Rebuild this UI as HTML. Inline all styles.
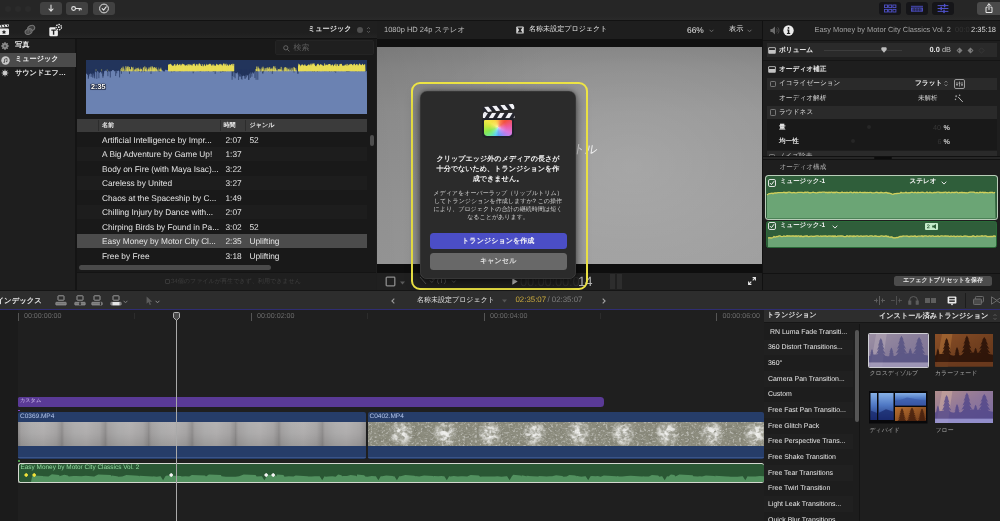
<!DOCTYPE html>
<html lang="ja">
<head>
<meta charset="utf-8">
<title>Final Cut Pro</title>
<style>
*{box-sizing:border-box;margin:0;padding:0}
html,body{width:1000px;height:521px;overflow:hidden;background:#1e1e1e}
body{position:relative;text-rendering:geometricPrecision;font-family:"Liberation Sans",sans-serif;font-size:9px;color:#dcdcdc;line-height:1}
#root{position:absolute;left:0;top:0;width:1000px;height:521px;overflow:hidden;will-change:transform}
.abs{position:absolute}
.t{position:absolute;white-space:nowrap;line-height:1}
.b{font-weight:bold}
svg{position:absolute;overflow:visible}
/* top toolbar */
#tb{left:0;top:0;width:1000px;height:21px;background:linear-gradient(#262626 0,#262626 80%,#2a2a2a 100%);border-bottom:1px solid #121212}
.tbtn{position:absolute;top:2px;height:13px;width:22px;border-radius:3px;background:#414141}
.tbtn.dark{background:#151518}
/* row2 */
#row2{left:0;top:21px;width:1000px;height:18px;background:linear-gradient(#1f1f1f 0,#1f1f1f 70%,#242424 100%);border-bottom:1px solid #121212}
/* sidebar */
#side{left:0;top:39px;width:76.5px;height:251px;background:#1e1e1e;border-right:2px solid #141414}
#side .sel{left:0;top:14px;width:76px;height:13.5px;background:#4b4b4b}
/* browser */
#br{left:77px;top:39px;width:299px;height:251px;background:#191919}
#search{left:198px;top:1px;width:99px;height:15px;background:#1f1f1f;border:1px solid #242424;border-radius:2px}
#wf{left:8.5px;top:21px;width:281.5px;height:54px;background:#22345b;overflow:hidden}
#th{left:0;top:80.4px;width:290px;height:12.8px;background:#3b3b3b}
.row{position:absolute;left:0;width:290px;height:14.5px}
.row.alt{background:#1d1d1d}
.row.sel{background:#4c4c4c}
.row span{position:absolute;top:3.6px;white-space:nowrap;color:#e4e4e4;font-size:8.3px}
/* viewer */
#vw{left:377px;top:21px;width:384.5px;height:269px;background:#1e1e1e}
#vimg{left:0;top:26px;width:384.5px;height:217px;background:linear-gradient(to right,rgba(0,0,0,.075) 0%,rgba(0,0,0,.03) 25%,rgba(0,0,0,0) 45%),radial-gradient(ellipse 60% 72% at 66% 55%,rgba(255,255,255,.13) 0%,rgba(255,255,255,.075) 40%,rgba(255,255,255,0) 100%),linear-gradient(to bottom,#838383 0%,#8c8c8c 10%,#959595 30%,#989898 50%,#9c9c9c 75%,#9e9e9e 100%)}
/* inspector */
#in{left:762px;top:21px;width:238px;height:269px;background:#1e1e1e;border-left:1px solid #111}
.irow{position:absolute;left:3.5px;width:230px;background:#2a2a2a}
/* timeline */
#tlbar{left:0;top:290px;width:1000px;height:20px;background:#2d2d2d;border-top:1px solid #151515;border-bottom:1.5px solid #2f2d72;z-index:3}
#tl{left:0;top:310px;width:763.5px;height:211px;background:#1f1f1f;overflow:hidden}
/* transitions */
#tr{left:764px;top:310px;width:236px;height:211px;background:#1e1e1e;overflow:hidden}
#tr .li{position:absolute;left:4px;font-size:6.95px;color:#e6e6e6;white-space:nowrap}
/* dialog */
#hl{left:411px;top:82px;width:176.5px;height:207.5px;border:2px solid #efe645;border-radius:9px}
#dlg{left:420px;top:91px;width:156px;height:188px;background:#2b2b2b;border-radius:7px;box-shadow:0 4px 14px rgba(0,0,0,.5),0 0 4px rgba(0,0,0,.35),0 0 0 .5px rgba(255,255,255,.12) inset}

</style>
</head>
<body>
<div id="root">

<!-- toolbar -->
<div id="tb" class="abs"><div class="abs" style="left:5px;top:6px;width:6px;height:6px;border-radius:50%;background:#2b2b2b"></div><div class="abs" style="left:15px;top:6px;width:6px;height:6px;border-radius:50%;background:#2b2b2b"></div><div class="abs" style="left:25px;top:6px;width:6px;height:6px;border-radius:50%;background:#2b2b2b"></div><div class="tbtn" style="left:39.5px"><svg width="22" height="13" viewBox="0 0 22 13"><path d="M11 3v6M9 7L11 9.200l2-2.200" fill="none" stroke="#e2e2e2" stroke-width="1.100" stroke-linecap="round" stroke-linejoin="round"/></svg></div><div class="tbtn" style="left:66px"><svg width="22" height="13" viewBox="0 0 22 13"><circle cx="7.6" cy="6.5" r="1.9" fill="none" stroke="#e2e2e2" stroke-width="1.1"/><path d="M9.5 6.5h5.6M13.3 6.5v1.8M15.1 6.5v1.3" fill="none" stroke="#e2e2e2" stroke-width="1.1" stroke-linecap="round"/></svg></div><div class="tbtn" style="left:92.5px"><svg width="22" height="13" viewBox="0 0 22 13"><circle cx="11" cy="6.500" r="4.400" fill="none" stroke="#e2e2e2" stroke-width="1"/><path d="M9.2 6.6l1.4 1.5 2.6-3.3" fill="none" stroke="#e2e2e2" stroke-width="1.1" stroke-linecap="round" stroke-linejoin="round"/></svg></div><div class="tbtn dark" style="left:879px"><svg width="22" height="13" viewBox="0 0 22 13" fill="none" stroke="#4f51c8" stroke-width=".9"><rect x="5.5" y="3" width="3" height="2.6"/><rect x="9.7" y="3" width="3" height="2.6"/><rect x="13.9" y="3" width="3" height="2.6"/><rect x="5.5" y="7.4" width="3" height="2.6"/><rect x="9.7" y="7.4" width="3" height="2.6"/><rect x="13.9" y="7.4" width="3" height="2.6"/></svg></div><div class="tbtn dark" style="left:905.5px"><svg width="22" height="13" viewBox="0 0 22 13" fill="none" stroke="#4f51c8" stroke-width=".9"><path d="M5 4.3h12"/><rect x="5.5" y="6" width="11" height="3.2" fill="#4f51c8" fill-opacity=".55"/><path d="M8.2 6v3.2M11 6v3.2M13.8 6v3.2" stroke="#151518" stroke-width=".6"/></svg></div><div class="tbtn dark" style="left:932px"><svg width="22" height="13" viewBox="0 0 22 13" fill="none" stroke="#4f51c8" stroke-width="1" stroke-linecap="round"><path d="M6 3.6h10M6 6.5h10M6 9.4h10"/><path d="M12.6 2.4v2.4M9.2 5.3v2.4M12 8.2v2.4" stroke-width="1.5"/></svg></div><div class="tbtn" style="left:977px;width:24px;background:#4a4a4a;border-radius:3px 0 0 3px"><svg width="24" height="13" viewBox="0 0 24 13" fill="none" stroke="#e8e8e8" stroke-width="1" stroke-linecap="round" stroke-linejoin="round"><path d="M10.2 5.2H9v5.3h6V5.2h-1.2M12 1.9v5.6M10.3 3.5L12 1.8l1.7 1.7"/></svg></div></div><div id="row2" class="abs"></div>
<!-- browser -->
<div class="abs" style="left:0;top:21px;width:376px;height:18px"><svg style="left:-1px;top:3px" width="11" height="12" viewBox="0 0 11 12"><path d="M0 1.2l9.6-1 .4 2.6-10 .9z" fill="#e9e9e9"/><path d="M2 1l1.2 2.4M5 .7l1.2 2.4M8 .4l1.2 2.4" stroke="#222" stroke-width="1"/><rect x="0" y="4.4" width="10" height="6.6" rx="1" fill="#e9e9e9"/><path d="M5 5.8l.7 1.4 1.5.2-1.1 1 .3 1.5L5 9.2l-1.4.7.3-1.5-1.1-1 1.5-.2z" fill="#222"/></svg><svg style="left:24px;top:3px" width="12" height="12" viewBox="0 0 12 12" fill="#3c3c3c" stroke="#747474" stroke-width="1.1"><ellipse cx="7.2" cy="4.2" rx="3.6" ry="2.6" transform="rotate(-25 7.2 4.2)"/><ellipse cx="4.6" cy="7.6" rx="3.6" ry="2.6" transform="rotate(-25 4.6 7.6)" fill="#4a4a4a"/><path d="M4.2 8.8V6.2l2-.5v2.5" stroke-width=".8"/></svg><svg style="left:49px;top:2.5px" width="13" height="13" viewBox="0 0 13 13"><rect x="0.3" y="3.3" width="8.6" height="9" rx="1.2" fill="#ededed"/><path d="M2.3 5.6h4.6v1.2H5.3v4H3.9v-4H2.3z" fill="#222"/><circle cx="9.800" cy="3.200" r="3.600" fill="#1f1f1f"/><circle cx="9.800" cy="3.200" r="2.700" fill="none" stroke="#ededed" stroke-width="1.300" stroke-dasharray="1.500 .9"/><circle cx="9.800" cy="3.200" r=".9" fill="#ededed"/></svg><span class="t b" style="left:308px;top:5px;font-size:7.15px;color:#e2e2e2">ミュージック</span><div class="abs" style="left:356.5px;top:6px;width:6px;height:6px;border-radius:50%;background:#505050"></div><svg style="left:365.5px;top:5px" width="5" height="8" viewBox="0 0 5 8" fill="none" stroke="#5c5c5c" stroke-width=".9"><path d="M1 3l1.5-1.6L4 3M1 5l1.5 1.6L4 5"/></svg></div><div id="side" class="abs"><div class="abs sel"></div><svg style="left:1px;top:2.5px" width="8" height="8" viewBox="0 0 8 8"><g fill="#8e8e8e"><ellipse cx="4" cy="1.7" rx="1" ry="1.6" transform="rotate(0 4 4)"/><ellipse cx="4" cy="1.7" rx="1" ry="1.6" transform="rotate(45 4 4)"/><ellipse cx="4" cy="1.7" rx="1" ry="1.6" transform="rotate(90 4 4)"/><ellipse cx="4" cy="1.7" rx="1" ry="1.6" transform="rotate(135 4 4)"/><ellipse cx="4" cy="1.7" rx="1" ry="1.6" transform="rotate(180 4 4)"/><ellipse cx="4" cy="1.7" rx="1" ry="1.6" transform="rotate(225 4 4)"/><ellipse cx="4" cy="1.7" rx="1" ry="1.6" transform="rotate(270 4 4)"/><ellipse cx="4" cy="1.7" rx="1" ry="1.6" transform="rotate(315 4 4)"/></g></svg><span class="t b" style="left:15px;top:3.2px;font-size:7.15px;color:#e6e6e6">写真</span><svg style="left:0.5px;top:16.5px" width="9" height="9" viewBox="0 0 9 9"><circle cx="4.5" cy="4.5" r="4.2" fill="#c9c9c9"/><path d="M3.6 6.2V3.1l2.4-.6v3.1" fill="none" stroke="#4b4b4b" stroke-width=".8"/><circle cx="3.1" cy="6.2" r=".7" fill="#4b4b4b"/><circle cx="5.5" cy="5.6" r=".7" fill="#4b4b4b"/></svg><span class="t b" style="left:15px;top:17.2px;font-size:7.15px;color:#f0f0f0">ミュージック</span><svg style="left:1px;top:30px" width="8" height="8" viewBox="0 0 8 8"><g fill="#cfcfcf"><path d="M4 0l.8 2.6h-1.6z" transform="rotate(0 4 4)"/><path d="M4 0l.8 2.6h-1.6z" transform="rotate(45 4 4)"/><path d="M4 0l.8 2.6h-1.6z" transform="rotate(90 4 4)"/><path d="M4 0l.8 2.6h-1.6z" transform="rotate(135 4 4)"/><path d="M4 0l.8 2.6h-1.6z" transform="rotate(180 4 4)"/><path d="M4 0l.8 2.6h-1.6z" transform="rotate(225 4 4)"/><path d="M4 0l.8 2.6h-1.6z" transform="rotate(270 4 4)"/><path d="M4 0l.8 2.6h-1.6z" transform="rotate(315 4 4)"/><circle cx="4" cy="4" r="2"/></g></svg><span class="t b" style="left:15px;top:31.2px;font-size:7.15px;color:#e6e6e6">サウンドエフ…</span></div><div id="br" class="abs"><div id="search" class="abs"><svg style="left:7px;top:3.5px" width="7" height="7" viewBox="0 0 7 7" fill="none" stroke="#6a6a6a" stroke-width=".9"><circle cx="2.8" cy="2.8" r="2.1"/><path d="M4.4 4.4l2 2"/></svg><span class="t" style="left:17.5px;top:2.6px;font-size:8px;color:#5e5e5e">検索</span></div><div id="wf" class="abs"><svg width="281.5" height="54" viewBox="0 0 281.5 54" style="left:0;top:0"><path d="M0.0 54.0 L0.0 14.1 L0.8 13.6 L1.6 14.8 L2.4 13.4 L3.2 14.4 L4.0 14.0 L4.8 13.2 L5.6 14.2 L6.4 13.1 L7.2 14.0 L8.0 13.1 L8.8 11.1 L9.6 11.8 L10.4 12.8 L11.2 11.0 L12.0 11.2 L12.8 12.2 L13.6 12.9 L14.4 12.0 L15.2 11.5 L16.0 12.8 L16.8 10.6 L17.6 12.5 L18.4 11.1 L19.2 10.7 L20.0 10.6 L20.8 11.0 L21.6 12.2 L22.4 10.6 L23.2 11.5 L24.0 11.6 L24.8 11.0 L25.6 11.3 L26.4 10.1 L27.2 10.1 L28.0 10.4 L28.8 11.5 L29.6 10.8 L30.4 10.5 L31.2 11.1 L32.0 10.8 L32.8 10.4 L33.6 11.5 L34.4 11.3 L35.2 10.0 L36.0 10.8 L36.8 10.7 L37.6 11.5 L38.4 11.2 L39.2 10.1 L40.0 11.8 L40.8 9.7 L41.6 10.4 L42.4 11.2 L43.2 9.8 L44.0 10.6 L44.8 9.5 L45.6 11.0 L46.4 11.2 L47.2 10.8 L48.0 11.5 L48.8 10.2 L49.6 11.1 L50.4 10.8 L51.2 10.8 L52.0 10.5 L52.8 11.4 L53.6 11.7 L54.4 10.5 L55.2 11.0 L56.0 9.5 L56.8 11.1 L57.6 11.0 L58.4 11.8 L59.2 11.4 L60.0 10.1 L60.8 10.3 L61.6 11.0 L62.4 9.5 L63.2 10.5 L64.0 9.8 L64.8 9.7 L65.6 9.5 L66.4 11.2 L67.2 9.7 L68.0 10.0 L68.8 10.3 L69.6 11.5 L70.4 9.6 L71.2 10.5 L72.0 10.7 L72.8 11.5 L73.6 11.4 L74.4 11.5 L75.2 10.1 L76.0 10.4 L76.8 10.3 L77.6 11.5 L78.4 11.7 L79.2 9.8 L80.0 9.8 L80.8 10.0 L81.6 10.0 L82.4 10.6 L83.2 10.8 L84.0 10.0 L84.8 9.4 L85.6 10.4 L86.4 10.3 L87.2 10.8 L88.0 11.7 L88.8 11.1 L89.6 10.6 L90.4 10.9 L91.2 11.0 L92.0 9.5 L92.8 11.6 L93.6 11.3 L94.4 11.5 L95.2 11.3 L96.0 10.3 L96.8 10.4 L97.6 9.6 L98.4 10.9 L99.2 9.5 L100.0 9.6 L100.8 9.9 L101.6 9.8 L102.4 10.2 L103.2 9.5 L104.0 9.4 L104.8 9.8 L105.6 9.6 L106.4 10.3 L107.2 9.5 L108.0 11.5 L108.8 10.9 L109.6 9.8 L110.4 10.0 L111.2 10.2 L112.0 10.3 L112.8 9.7 L113.6 11.4 L114.4 11.8 L115.2 10.5 L116.0 10.6 L116.8 9.6 L117.6 9.6 L118.4 10.2 L119.2 10.0 L120.0 11.4 L120.8 9.8 L121.6 9.5 L122.4 11.7 L123.2 10.7 L124.0 9.8 L124.8 10.7 L125.6 9.5 L126.4 10.7 L127.2 11.7 L128.0 11.5 L128.8 11.1 L129.6 10.0 L130.4 10.3 L131.2 9.8 L132.0 11.3 L132.8 10.7 L133.6 11.3 L134.4 10.2 L135.2 9.9 L136.0 11.3 L136.8 11.8 L137.6 11.4 L138.4 11.3 L139.2 11.4 L140.0 11.2 L140.8 9.9 L141.6 10.6 L142.4 10.3 L143.2 9.5 L144.0 9.5 L144.8 10.1 L145.6 10.0 L146.4 11.8 L147.2 12.5 L148.0 11.5 L148.8 12.8 L149.6 13.2 L150.4 13.5 L151.2 12.4 L152.0 12.5 L152.8 12.9 L153.6 13.3 L154.4 13.7 L155.2 15.1 L156.0 16.1 L156.8 16.2 L157.6 15.4 L158.4 15.9 L159.2 16.1 L160.0 14.2 L160.8 15.2 L161.6 15.4 L162.4 14.7 L163.2 14.2 L164.0 13.1 L164.8 12.0 L165.6 13.1 L166.4 11.7 L167.2 12.5 L168.0 12.7 L168.8 11.2 L169.6 11.1 L170.4 12.3 L171.2 11.7 L172.0 9.8 L172.8 9.7 L173.6 9.8 L174.4 11.6 L175.2 11.3 L176.0 9.8 L176.8 11.4 L177.6 11.8 L178.4 11.0 L179.2 10.2 L180.0 10.7 L180.8 9.7 L181.6 9.4 L182.4 11.7 L183.2 11.0 L184.0 10.7 L184.8 11.6 L185.6 10.4 L186.4 11.5 L187.2 11.4 L188.0 9.9 L188.8 10.0 L189.6 10.1 L190.4 10.0 L191.2 10.8 L192.0 10.0 L192.8 10.4 L193.6 9.7 L194.4 11.6 L195.2 10.2 L196.0 10.5 L196.8 10.8 L197.6 11.6 L198.4 10.4 L199.2 11.6 L200.0 10.6 L200.8 10.7 L201.6 10.7 L202.4 9.4 L203.2 10.5 L204.0 9.8 L204.8 9.4 L205.6 11.3 L206.4 9.8 L207.2 10.5 L208.0 11.1 L208.8 10.7 L209.6 10.2 L210.4 10.6 L211.2 10.7 L212.0 11.3 L212.8 9.7 L213.6 10.7 L214.4 10.0 L215.2 10.1 L216.0 11.3 L216.8 10.6 L217.6 10.7 L218.4 11.2 L219.2 11.6 L220.0 10.5 L220.8 10.9 L221.6 10.6 L222.4 10.6 L223.2 11.1 L224.0 10.5 L224.8 10.7 L225.6 10.5 L226.4 11.7 L227.2 11.1 L228.0 11.5 L228.8 11.7 L229.6 10.0 L230.4 10.7 L231.2 11.7 L232.0 11.4 L232.8 9.7 L233.6 9.7 L234.4 10.5 L235.2 9.6 L236.0 10.0 L236.8 9.6 L237.6 11.0 L238.4 11.3 L239.2 11.6 L240.0 9.8 L240.8 11.1 L241.6 11.0 L242.4 9.7 L243.2 11.5 L244.0 11.7 L244.8 9.9 L245.6 11.7 L246.4 10.4 L247.2 10.6 L248.0 11.8 L248.8 11.4 L249.6 9.8 L250.4 10.4 L251.2 10.6 L252.0 10.2 L252.8 9.9 L253.6 10.2 L254.4 11.1 L255.2 9.4 L256.0 10.7 L256.8 10.5 L257.6 9.4 L258.4 10.2 L259.2 10.9 L260.0 10.6 L260.8 9.6 L261.6 11.8 L262.4 11.3 L263.2 11.7 L264.0 9.7 L264.8 10.0 L265.6 9.5 L266.4 11.3 L267.2 10.0 L268.0 9.7 L268.8 10.4 L269.6 11.6 L270.4 11.4 L271.2 10.0 L272.0 9.8 L272.8 11.6 L273.6 10.8 L274.4 11.1 L275.2 9.6 L276.0 9.5 L276.8 11.1 L277.6 10.4 L278.4 9.6 L279.2 11.7 L280.0 10.9 L280.8 11.3 L281.5 54.0 Z" fill="#6b82b2"/><path d="M2.9 9L2.9 16.2 M160.4 9L160.4 17.4 M1.5 9L1.5 14.8 M177.0 9L177.0 13.5 M159.0 9L159.0 18.6 M5.2 9L5.2 16.9 M6.6 9L6.6 17.6 M163.1 9L163.1 19.8 M10.8 9L10.8 18.8 M162.5 9L162.5 19.9 M146.4 9L146.4 16.0 M107.2 9L107.2 13.3 M152.3 9L152.3 14.3 M146.1 9L146.1 19.8 M152.4 9L152.4 14.5 M154.7 9L154.7 16.5 M159.1 9L159.1 18.7 M161.3 9L161.3 15.1 M8.1 9L8.1 17.6 M168.9 9L168.9 18.0 M17.3 9L17.3 13.3 M176.6 9L176.6 13.4 M211.9 9L211.9 13.7 M164.4 9L164.4 17.8 M24.3 9L24.3 17.5 M33.6 9L33.6 17.4 M21.9 9L21.9 16.2 M2.5 9L2.5 17.6 M2.3 9L2.3 18.9 M65.0 9L65.0 14.0 M134.8 9L134.8 12.6 M55.8 9L55.8 12.3 M85.7 9L85.7 12.3 M16.9 9L16.9 17.8 M153.6 9L153.6 16.3 M171.8 9L171.8 19.8 M129.2 9L129.2 13.9 M15.7 9L15.7 13.5 M165.4 9L165.4 13.9 M249.7 9L249.7 12.7 M17.4 9L17.4 13.0 M17.2 9L17.2 15.9 M149.1 9L149.1 18.3 M260.8 9L260.8 12.0 M152.6 9L152.6 20.0 M155.4 9L155.4 19.0 M186.3 9L186.3 13.9 M8.7 9L8.7 18.4 M8.2 9L8.2 15.8 M30.7 9L30.7 13.3 M211.9 9L211.9 13.7 M17.0 9L17.0 16.3 M208.0 9L208.0 12.5 M153.8 9L153.8 13.8 M148.0 9L148.0 16.9 M154.7 9L154.7 14.0 M6.7 9L6.7 15.2 M12.9 9L12.9 18.2 M156.8 9L156.8 14.9 M159.0 9L159.0 13.9 M17.6 9L17.6 13.6 M156.0 9L156.0 19.7 M29.7 9L29.7 16.0 M166.9 9L166.9 13.0 M170.1 9L170.1 19.8 M43.5 9L43.5 13.9 M167.5 9L167.5 13.6 M35.4 9L35.4 13.8 M153.9 9L153.9 16.7 M165.9 9L165.9 16.7" stroke="#22345b" stroke-width=".7" fill="none"/><path d="M82.0 11.3 L82.0 5.1 L82.6 4.6 L83.2 4.1 L83.8 5.2 L84.4 3.4 L85.0 4.3 L85.6 4.8 L86.2 6.3 L86.8 5.3 L87.4 6.1 L88.0 4.8 L88.6 4.1 L89.2 4.1 L89.8 6.3 L90.4 5.5 L91.0 4.3 L91.6 3.5 L92.2 4.9 L92.8 5.4 L93.4 4.7 L94.0 4.2 L94.6 5.4 L95.2 6.2 L95.8 4.1 L96.4 3.5 L97.0 4.4 L97.6 4.7 L98.2 5.4 L98.8 4.0 L99.4 5.8 L100.0 5.6 L100.6 4.9 L101.2 4.0 L101.8 6.3 L102.4 4.3 L103.0 5.9 L103.6 4.1 L104.2 4.1 L104.8 5.7 L105.4 4.3 L106.0 6.3 L106.6 4.9 L107.2 4.0 L107.8 4.1 L108.4 4.7 L109.0 5.4 L109.6 6.2 L110.2 3.8 L110.8 4.6 L111.4 4.0 L112.0 6.3 L112.6 3.8 L113.2 3.6 L113.8 3.6 L114.4 4.6 L115.0 6.1 L115.6 6.1 L116.2 5.6 L116.8 6.4 L117.4 6.2 L118.0 4.4 L118.6 4.0 L119.2 6.2 L119.8 5.6 L120.4 3.5 L121.0 5.4 L121.6 4.5 L122.2 4.5 L122.8 4.4 L123.4 3.9 L124.0 3.4 L124.6 4.2 L125.2 4.5 L125.8 6.3 L126.4 3.8 L127.0 6.3 L127.6 4.0 L128.2 4.5 L128.8 5.9 L129.4 5.9 L130.0 4.7 L130.6 3.5 L131.2 4.8 L131.8 4.5 L132.4 6.2 L133.0 4.0 L133.6 4.5 L134.2 6.1 L134.8 3.5 L135.4 4.6 L136.0 5.8 L136.6 5.7 L137.2 3.5 L137.8 3.5 L138.4 3.6 L139.0 6.2 L139.6 4.2 L140.2 5.6 L140.8 6.1 L141.4 4.4 L142.0 4.2 L142.6 6.3 L143.2 5.3 L143.8 4.2 L144.4 5.5 L145.0 4.3 L145.6 4.2 L146.2 3.4 L146.8 5.7 L147.4 6.1 L148.0 5.3 L148.0 11.3Z M212.0 11.3 L212.0 6.2 L212.6 3.5 L213.2 4.1 L213.8 4.8 L214.4 6.3 L215.0 6.3 L215.6 4.6 L216.2 4.2 L216.8 4.7 L217.4 4.9 L218.0 6.2 L218.6 3.9 L219.2 5.8 L219.8 5.6 L220.4 5.9 L221.0 5.7 L221.6 5.2 L222.2 4.4 L222.8 4.4 L223.4 4.5 L224.0 5.7 L224.6 3.6 L225.2 4.0 L225.8 5.7 L226.4 4.1 L227.0 3.6 L227.6 3.5 L228.2 5.1 L228.8 4.4 L229.4 6.3 L230.0 6.1 L230.6 6.4 L231.2 4.2 L231.8 3.7 L232.4 3.7 L233.0 4.9 L233.6 5.5 L234.2 4.7 L234.8 4.1 L235.4 4.7 L236.0 5.3 L236.6 5.4 L237.2 5.6 L237.8 5.9 L238.4 5.4 L239.0 3.8 L239.6 5.9 L240.2 4.3 L240.8 5.1 L241.4 4.5 L242.0 5.6 L242.6 4.0 L243.2 4.1 L243.8 4.1 L244.4 3.9 L245.0 6.1 L245.6 5.1 L246.2 4.4 L246.8 4.6 L247.4 6.4 L248.0 4.9 L248.6 4.1 L249.2 5.8 L249.8 5.4 L250.4 6.4 L251.0 3.7 L251.6 4.8 L252.2 5.9 L252.8 5.9 L253.4 6.1 L254.0 3.5 L254.6 4.3 L255.2 3.8 L255.8 4.0 L256.4 6.3 L257.0 5.1 L257.6 6.2 L258.2 4.5 L258.8 6.0 L259.4 4.7 L260.0 4.2 L260.6 5.7 L261.2 6.2 L261.8 3.7 L262.4 5.2 L263.0 5.3 L263.6 4.1 L264.2 4.5 L264.8 3.8 L265.4 4.0 L266.0 4.2 L266.6 5.2 L267.2 5.4 L267.8 4.0 L268.4 3.4 L269.0 4.4 L269.6 5.4 L270.2 4.0 L270.8 4.3 L271.4 4.0 L272.0 5.8 L272.6 5.0 L273.2 3.6 L273.8 3.7 L274.4 4.6 L275.0 5.1 L275.6 5.3 L276.2 3.7 L276.8 3.9 L277.4 5.5 L278.0 4.6 L278.6 4.2 L279.2 4.3 L279.5 11.3Z" fill="#e6db55"/><path d="M36.0 11.3 L36.0 10.8 L36.6 7.9 L37.2 9.0 L37.8 8.1 L38.4 8.4 L39.0 10.4 L39.6 11.0 L40.2 8.1 L40.8 7.4 L41.4 9.8 L42.0 7.4 L42.6 6.5 L43.2 10.6 L43.8 8.4 L44.4 10.2 L45.0 8.3 L45.6 10.5 L46.2 8.6 L46.8 7.2 L47.4 6.6 L48.0 9.0 L48.6 9.4 L49.2 10.6 L49.8 6.9 L50.4 9.3 L51.0 8.2 L51.6 8.8 L52.2 7.2 L52.8 7.8 L53.4 8.8 L54.0 10.7 L54.6 7.0 L55.2 8.7 L55.8 10.1 L56.4 10.9 L57.0 7.4 L57.6 7.1 L58.2 10.7 L58.8 10.9 L59.4 8.7 L60.0 6.7 L60.6 10.7 L61.2 8.2 L61.8 10.6 L62.4 9.3 L63.0 10.2 L63.6 7.2 L64.2 10.0 L64.8 7.5 L65.4 8.3 L66.0 10.3 L66.6 10.2 L67.2 7.3 L67.8 7.5 L68.4 8.3 L69.0 8.8 L69.6 8.2 L70.2 7.1 L70.8 7.6 L71.4 9.8 L72.0 10.5 L72.6 6.7 L73.2 9.0 L73.8 9.9 L74.4 6.7 L75.0 10.3 L75.6 7.0 L76.0 11.3Z M170.0 11.3 L170.0 9.2 L170.6 9.0 L171.2 9.3 L171.8 7.9 L172.4 8.4 L173.0 9.1 L173.6 8.4 L174.2 9.5 L174.8 8.5 L175.4 8.5 L176.0 6.6 L176.6 9.3 L177.2 8.7 L177.8 7.6 L178.4 9.9 L179.0 10.0 L179.6 8.6 L180.2 7.3 L180.8 8.6 L181.4 7.0 L182.0 7.1 L182.6 8.4 L183.2 6.9 L183.8 8.5 L184.4 8.8 L185.0 6.7 L185.6 9.4 L186.2 6.9 L186.8 9.8 L187.4 10.0 L188.0 8.8 L188.6 6.7 L189.2 8.8 L189.8 8.2 L190.4 10.8 L191.0 7.1 L191.6 10.4 L192.2 11.0 L192.8 9.8 L193.4 10.2 L194.0 7.4 L194.6 10.9 L195.2 8.7 L195.8 10.8 L196.4 10.6 L197.0 7.2 L197.6 10.0 L198.2 10.7 L198.8 6.8 L199.4 8.1 L200.0 9.9 L200.6 7.2 L201.2 10.5 L201.8 7.7 L202.4 10.2 L203.0 7.1 L203.6 8.8 L204.2 10.6 L204.8 7.4 L205.4 7.7 L206.0 8.8 L206.6 7.9 L207.2 6.7 L207.8 7.3 L208.4 7.2 L209.0 10.7 L209.6 9.6 L210.2 10.5 L210.8 7.3 L211.0 11.3Z" fill="#e6db55" opacity=".5"/><path d="M35.7 11.2 V7.8 M37.1 11.2 V6.6 M39.9 11.2 V6.2 M41.3 11.2 V6.9 M42.0 11.2 V6.2 M43.4 11.2 V7.0 M44.1 11.2 V9.1 M45.5 11.2 V6.8 M46.2 11.2 V7.5 M49.0 11.2 V9.7 M49.7 11.2 V9.2 M51.1 11.2 V7.9 M52.5 11.2 V8.9 M53.9 11.2 V9.7 M54.6 11.2 V9.3 M55.3 11.2 V8.9 M57.4 11.2 V7.5 M58.8 11.2 V6.4 M59.5 11.2 V9.2 M60.2 11.2 V7.5 M62.3 11.2 V8.8 M63.0 11.2 V7.4 M64.4 11.2 V7.4 M65.1 11.2 V6.4 M66.5 11.2 V6.5 M67.2 11.2 V7.8 M67.9 11.2 V8.9 M68.6 11.2 V7.0 M69.3 11.2 V7.8 M70.7 11.2 V9.0 M74.2 11.2 V8.6 M74.9 11.2 V9.5 M83.4 11.2 V4.2 M84.8 11.2 V4.9 M85.5 11.2 V8.2 M86.2 11.2 V8.2 M86.9 11.2 V7.5 M90.4 11.2 V6.1 M91.1 11.2 V4.6 M92.5 11.2 V5.5 M93.9 11.2 V4.0 M94.6 11.2 V8.0 M95.3 11.2 V4.9 M97.4 11.2 V4.0 M98.1 11.2 V8.1 M102.3 11.2 V4.2 M104.4 11.2 V5.0 M105.8 11.2 V8.3 M107.2 11.2 V3.8 M107.9 11.2 V9.5 M108.6 11.2 V3.7 M109.3 11.2 V8.8 M110.0 11.2 V9.4 M113.5 11.2 V5.9 M114.2 11.2 V4.4 M116.3 11.2 V4.1 M118.4 11.2 V8.4 M119.1 11.2 V9.5 M123.3 11.2 V9.1 M124.0 11.2 V4.8 M124.7 11.2 V7.6 M125.4 11.2 V9.6 M126.1 11.2 V7.9 M127.5 11.2 V7.6 M131.0 11.2 V7.0 M131.7 11.2 V4.7 M132.4 11.2 V5.1 M133.8 11.2 V4.1 M134.5 11.2 V4.4 M135.2 11.2 V9.7 M135.9 11.2 V4.7 M137.3 11.2 V6.5 M138.0 11.2 V4.5 M138.7 11.2 V6.5 M139.4 11.2 V4.3 M140.1 11.2 V3.6 M140.8 11.2 V8.3 M142.2 11.2 V9.0 M143.6 11.2 V4.6 M146.4 11.2 V7.1 M147.1 11.2 V3.9 M147.8 11.2 V3.9 M170.0 11.2 V9.0 M170.7 11.2 V6.5 M172.1 11.2 V6.6 M172.8 11.2 V8.1 M176.3 11.2 V8.6 M177.0 11.2 V6.7 M179.1 11.2 V8.2 M181.2 11.2 V8.1 M182.6 11.2 V9.0 M183.3 11.2 V7.2 M184.7 11.2 V9.2 M185.4 11.2 V8.6 M186.8 11.2 V8.6 M187.5 11.2 V6.3 M188.9 11.2 V6.3 M189.6 11.2 V8.4 M192.4 11.2 V9.0 M193.8 11.2 V9.0 M194.5 11.2 V9.6 M195.2 11.2 V6.9 M198.7 11.2 V7.6 M199.4 11.2 V7.1 M200.8 11.2 V7.7 M202.2 11.2 V8.9 M208.5 11.2 V7.5 M209.2 11.2 V8.2 M212.7 11.2 V6.9 M213.4 11.2 V5.7 M214.1 11.2 V5.3 M215.5 11.2 V5.4 M216.9 11.2 V6.5 M218.3 11.2 V6.2 M219.0 11.2 V4.6 M221.1 11.2 V6.0 M226.0 11.2 V3.5 M226.7 11.2 V5.3 M227.4 11.2 V4.7 M228.1 11.2 V3.3 M228.8 11.2 V9.3 M229.5 11.2 V7.1 M230.2 11.2 V7.0 M230.9 11.2 V5.2 M231.6 11.2 V8.0 M232.3 11.2 V4.9 M234.4 11.2 V4.5 M235.1 11.2 V8.3 M235.8 11.2 V4.7 M237.9 11.2 V6.0 M238.6 11.2 V3.4 M239.3 11.2 V5.5 M241.4 11.2 V7.8 M242.8 11.2 V4.3 M243.5 11.2 V4.2 M244.2 11.2 V7.3 M244.9 11.2 V6.9 M245.6 11.2 V9.7 M247.0 11.2 V8.1 M247.7 11.2 V6.6 M248.4 11.2 V5.6 M249.8 11.2 V3.7 M251.2 11.2 V4.3 M253.3 11.2 V4.3 M254.7 11.2 V9.6 M256.8 11.2 V9.0 M257.5 11.2 V8.2 M258.9 11.2 V8.7 M261.0 11.2 V3.9 M265.9 11.2 V5.2 M268.0 11.2 V4.0 M269.4 11.2 V8.2 M270.1 11.2 V6.5 M270.8 11.2 V6.7 M271.5 11.2 V6.5 M272.2 11.2 V6.2 M273.6 11.2 V4.2 M274.3 11.2 V6.0 M276.4 11.2 V7.0 M277.8 11.2 V5.6" stroke="#e8dd57" stroke-width=".8" fill="none"/><path d="M10.0 11.2 V9.1 M15.6 11.2 V9.0 M21.2 11.2 V9.3 M34.5 11.2 V9.0" stroke="#e8dd57" stroke-width=".7" fill="none" opacity=".55"/></svg><span class="t b" style="left:4.5px;top:23.5px;padding:0 1px;height:6.5px;line-height:6.5px;background:rgba(30,40,70,.55);font-size:7.2px;color:#fff;text-shadow:0 0 1px #000,0 0 1.5px #000">2:35</span></div><div id="th" class="abs"><div class="abs" style="left:20.5px;top:1px;width:1px;height:10.5px;background:#2c2c2c"></div><div class="abs" style="left:143px;top:1px;width:1px;height:10.5px;background:#2c2c2c"></div><div class="abs" style="left:168px;top:1px;width:1px;height:10.5px;background:#2c2c2c"></div><span class="t b" style="left:25px;top:3.4px;font-size:6.1px;color:#ececec">名前</span><span class="t b" style="left:146.5px;top:3.4px;font-size:6.1px;color:#ececec">時間</span><span class="t b" style="left:172.5px;top:3.4px;font-size:6.1px;color:#ececec">ジャンル</span></div><div class="row" style="top:93.40px"><span style="left:25px">Artificial Intelligence by Impr...</span><span style="left:148.5px">2:07</span><span style="left:172.5px">52</span></div><div class="row alt" style="top:107.85px"><span style="left:25px">A Big Adventure by Game Up!</span><span style="left:148.5px">1:37</span><span style="left:172.5px"></span></div><div class="row" style="top:122.30px"><span style="left:25px">Body on Fire (with Maya Isac)...</span><span style="left:148.5px">3:22</span><span style="left:172.5px"></span></div><div class="row alt" style="top:136.75px"><span style="left:25px">Careless by United</span><span style="left:148.5px">3:27</span><span style="left:172.5px"></span></div><div class="row" style="top:151.20px"><span style="left:25px">Chaos at the Spaceship by C...</span><span style="left:148.5px">1:49</span><span style="left:172.5px"></span></div><div class="row alt" style="top:165.65px"><span style="left:25px">Chilling Injury by Dance with...</span><span style="left:148.5px">2:07</span><span style="left:172.5px"></span></div><div class="row" style="top:180.10px"><span style="left:25px">Chirping Birds by Found in Pa...</span><span style="left:148.5px">3:02</span><span style="left:172.5px">52</span></div><div class="row sel" style="top:194.55px"><span style="left:25px">Easy Money by Motor City Cl...</span><span style="left:148.5px">2:35</span><span style="left:172.5px">Uplifting</span></div><div class="row" style="top:209.00px"><span style="left:25px">Free by Free</span><span style="left:148.5px">3:18</span><span style="left:172.5px">Uplifting</span></div><div class="abs" style="left:292.5px;top:96px;width:4px;height:11px;border-radius:2px;background:#4e4e4e"></div><div class="abs" style="left:2px;top:226px;width:192px;height:4.5px;border-radius:2.5px;background:#4a4a4a"></div><div class="abs" style="left:0;top:232.5px;width:299px;height:18.5px;background:#1f1f1f;border-top:1px solid #141414"></div><div class="abs" style="left:87.500px;top:240.300px;width:5px;height:5px;border:.8px solid #383838;border-radius:1px"></div><span class="t" style="left:94px;top:240px;font-size:6.070px;color:#3e3e3e">34個のファイルが再生できず、利用できません</span></div>
<!-- viewer -->
<div id="vw" class="abs"><span class="t" style="left:7px;top:5.2px;font-size:7.5px;color:#bdbdbd">1080p HD 24p ステレオ</span><svg style="left:139px;top:5px" width="8" height="8" viewBox="0 0 9 9"><rect x=".3" y=".5" width="8.4" height="8" rx="1" fill="#d6d6d6"/><path d="M1.6 1.8h5.8L5.4 4.5l2 2.7H1.6l2-2.7z" fill="#1f1f1f"/></svg><span class="t" style="left:152px;top:5.3px;font-size:7.050px;color:#e6e6e6">名称未設定プロジェクト</span><span class="t" style="left:310px;top:4.6px;font-size:8.4px;color:#e0e0e0">66%</span><svg style="left:331.5px;top:7.5px" width="5" height="4" viewBox="0 0 5 4" fill="none" stroke="#6a6a6a" stroke-width="1"><path d="M.6.8l1.9 2 1.9-2"/></svg><span class="t" style="left:352px;top:5.3px;font-size:7.15px;color:#dedede">表示</span><svg style="left:369.5px;top:7.5px" width="5" height="4" viewBox="0 0 5 4" fill="none" stroke="#6a6a6a" stroke-width="1"><path d="M.6.8l1.9 2 1.9-2"/></svg><div class="abs" style="left:0;top:17.5px;width:384.5px;height:9px;background:#101010"></div><div id="vimg" class="abs"></div><span class="t" style="left:195.500px;top:122px;font-size:12px;color:#f1f1f1;transform:skewX(-7deg) rotate(2deg)">トル</span><div class="abs" style="left:0;top:243px;width:384.5px;height:8.5px;background:#0e0e0e"></div><div class="abs" style="left:0;top:251.5px;width:384.5px;height:17.5px;background:#202020"></div><svg style="left:8px;top:255px" width="11" height="11" viewBox="0 0 11 11" fill="none" stroke="#8c8c8c" stroke-width="1.3"><rect x="1.200" y="1.200" width="8.600" height="8.600" rx=".8"/></svg><svg style="left:23px;top:259.500px" width="5" height="4" viewBox="0 0 5 4" fill="#5a5a5a"><path d="M0 .5h5L2.500 3.500z"/></svg><svg style="left:42px;top:255px" width="40" height="10" viewBox="0 0 40 10" fill="none" stroke="#5a5a5a" stroke-width="1"><path d="M1 1l6 7M13 3h3M20 2c-2 2-2 4 0 6M25 2c2 2 2 4 0 6M22.5 3v4"/><path d="M11 4.5l1.8 2 1.8-2M33 4.5l1.8 2 1.8-2" stroke-width=".9"/></svg><svg style="left:135px;top:257px" width="6" height="7" viewBox="0 0 6 7"><path d="M.3.2l5.4 3.3L.3 6.8z" fill="#cfcfcf"/></svg><span class="t" style="left:143px;top:254px;font-size:13px;letter-spacing:-.2px;color:#323232;font-weight:normal">00:00:00:0</span><span class="t" style="left:201px;top:253.500px;font-size:13.500px;letter-spacing:-.5px;color:#b4b4b4">14</span><div class="abs" style="left:233px;top:253px;width:5px;height:15px;background:#2d2d2d"></div><div class="abs" style="left:240px;top:253px;width:5px;height:15px;background:#2d2d2d"></div><svg style="left:371px;top:256px" width="8" height="8" viewBox="0 0 8 8" fill="none" stroke="#e6e6e6" stroke-width="1.1"><path d="M4.6.6h2.8v2.8M7.2.8L4.7 3.3M3.4 7.4H.6V4.6M.8 7.2l2.5-2.5"/></svg></div>
<!-- inspector -->
<div id="in" class="abs"><svg style="left:7px;top:4.5px" width="10" height="9" viewBox="0 0 10 9"><path d="M.4 3h1.8L5 .6v7.8L2.2 6H.4z" fill="#6c6c6c"/><path d="M6.4 2.6c.9.9.9 2.9 0 3.8M7.8 1.4c1.6 1.6 1.6 4.6 0 6.2" fill="none" stroke="#555" stroke-width=".9"/></svg><svg style="left:19.5px;top:3.5px" width="11" height="11" viewBox="0 0 11 11"><circle cx="5.5" cy="5.5" r="5.2" fill="#ececec"/><circle cx="5.5" cy="2.9" r=".9" fill="#1f1f1f"/><path d="M4.2 4.5h2.1v3.6h.9v.9H3.9v-.9h.9V5.4h-.6z" fill="#1f1f1f"/></svg><span class="t" style="left:51.5px;top:5.399999999999999px;font-size:7.4px;color:#a2a2a2">Easy Money by Motor City Classics Vol. 2</span><span class="t" style="left:192px;top:5.399999999999999px;font-size:7.5px;color:#343434">00:0</span><span class="t" style="left:208px;top:5.399999999999999px;font-size:7.5px;color:#dcdcdc">2:35:18</span><div class="abs" style="left:0;top:18.5px;width:238px;height:1px;background:#141414"></div><div class="irow" style="top:22px;height:14px"></div><svg style="left:5px;top:25.5px" width="8" height="7" viewBox="0 0 8 7"><rect x=".2" y=".2" width="7.6" height="6.6" rx="1" fill="#c4c4c4"/><rect x="1.1" y="1.1" width="5.8" height="1.9" fill="#2a2a2a"/></svg><span class="t b" style="left:16px;top:26.6px;font-size:6.7px;color:#e8e8e8">ボリューム</span><div class="abs" style="left:61px;top:28.6px;width:78px;height:1.2px;background:#3c3c3c"></div><svg style="left:118px;top:26px" width="6" height="6" viewBox="0 0 6 6"><path d="M.4 1.2Q.4.3 1.3.3h3.4q.9 0 .9.9v1.6L3 5.7.4 2.8z" fill="#bcbcbc"/></svg><span class="t b" style="left:166.5px;top:25.4px;font-size:7.4px;color:#e8e8e8">0.0</span><span class="t" style="left:179px;top:25.4px;font-size:7.4px;color:#bdbdbd">dB</span><svg style="left:192.5px;top:25.5px" width="7" height="7" viewBox="0 0 7 7"><path d="M3.5.5l3 3-3 3-3-3z" fill="#7c7c7c"/><path d="M2.9 2.4v2.2L1.7 3.5z" fill="#2a2a2a"/></svg><svg style="left:203.5px;top:25.5px" width="7" height="7" viewBox="0 0 7 7"><path d="M3.5.5l3 3-3 3-3-3z" fill="#7c7c7c"/><path d="M4.1 2.4v2.2l1.2-1.1z" fill="#2a2a2a"/></svg><svg style="left:214.5px;top:25.5px" width="7" height="7" viewBox="0 0 7 7"><path d="M3.5.8l2.7 2.7-2.7 2.7L.8 3.5z" fill="none" stroke="#3a3a3a" stroke-width=".8"/></svg><div class="abs" style="left:0;top:39px;width:238px;height:1px;background:#151515"></div><svg style="left:5px;top:44.5px" width="8" height="7" viewBox="0 0 8 7"><rect x=".2" y=".2" width="7.6" height="6.6" rx="1" fill="#c4c4c4"/><rect x="1.1" y="1.1" width="5.8" height="1.9" fill="#1f1f1f"/></svg><span class="t b" style="left:16px;top:45.599999999999994px;font-size:6.7px;color:#e8e8e8">オーディオ補正</span><div class="irow" style="top:56.5px;height:12.5px"></div><div class="abs" style="left:6.5px;top:59.5px;width:6.5px;height:6.5px;border:1px solid #777;border-radius:1.2px"></div><span class="t" style="left:16px;top:60.400000000000006px;font-size:6.7px;color:#dcdcdc">イコライゼーション</span><span class="t b" style="left:152px;top:60.400000000000006px;font-size:6.7px;color:#f0f0f0">フラット</span><svg style="left:181px;top:59.3px" width="4" height="7" viewBox="0 0 4 7" fill="none" stroke="#8a8a8a" stroke-width=".8"><path d="M.6 2.6L2 1l1.4 1.6M.6 4.4L2 6l1.4-1.6"/></svg><svg style="left:191px;top:57.8px" width="11" height="10" viewBox="0 0 11 10" fill="none" stroke="#bdbdbd" stroke-width=".8"><rect x=".5" y=".5" width="10" height="9" rx="1.4"/><path d="M3 3v4M5.5 2.5v5M8 3v4M2 5.4h2M4.5 4.2h2M7 5.8h2" stroke-width=".7"/></svg><span class="t" style="left:16px;top:74.7px;font-size:6.7px;color:#d6d6d6">オーディオ解析</span><span class="t" style="left:155px;top:74.7px;font-size:6.5px;color:#cfcfcf">未解析</span><svg style="left:191px;top:72.8px" width="10" height="9" viewBox="0 0 10 9" fill="none" stroke="#b4b4b4" stroke-width="1"><path d="M4.2 3l4.6 5"/><path d="M2.2 1.2v2M1.2 2.2h2M5.6.6v1.4M4.9 1.3h1.4M.8 5.4h1.4M1.5 4.7v1.4" stroke-width=".7"/></svg><div class="irow" style="top:85px;height:13px"></div><div class="abs" style="left:6.5px;top:88.3px;width:6.5px;height:6.5px;border:1px solid #777;border-radius:1.2px"></div><span class="t" style="left:16px;top:89.2px;font-size:6.7px;color:#dcdcdc">ラウドネス</span><div class="abs" style="left:3.5px;top:98px;width:230px;height:30.5px;background:#191919"></div><span class="t b" style="left:16px;top:103.7px;font-size:6.6px;color:#e0e0e0">量</span><div class="abs" style="left:104px;top:104px;width:4px;height:4px;border-radius:50%;background:#262626"></div><span class="t" style="left:170px;top:102.5px;font-size:7.2px;color:#363636">40</span><span class="t b" style="left:180.5px;top:102.5px;font-size:7.2px;color:#d0d0d0">%</span><span class="t b" style="left:16px;top:117.69999999999999px;font-size:6.6px;color:#e0e0e0">均一性</span><div class="abs" style="left:88px;top:118px;width:4px;height:4px;border-radius:50%;background:#262626"></div><span class="t" style="left:174.5px;top:116.5px;font-size:7.2px;color:#363636">6</span><span class="t b" style="left:180.5px;top:116.5px;font-size:7.2px;color:#d0d0d0">%</span><div class="abs" style="left:3.5px;top:129.5px;width:230px;height:6px;background:#2a2a2a;overflow:hidden"><div class="abs" style="left:2px;top:3.5px;width:6.5px;height:6.5px;border:1px solid #777;border-radius:1.2px"></div><span class="t" style="left:12px;top:3px;font-size:6.7px;color:#bcbcbc">ノイズ除去</span></div><div class="abs" style="left:0;top:135px;width:238px;height:4px;background:#262626;border-top:1px solid #111;border-bottom:1px solid #111"></div><div class="abs" style="left:111px;top:136.3px;width:18px;height:1.6px;border-radius:1px;background:#0c0c0c"></div><span class="t" style="left:16.5px;top:144.3px;font-size:6.6px;color:#b4b4b4">オーディオ構成</span><div class="abs" style="left:3px;top:155px;width:231px;height:42.5px;background:#2f5e3a;border-radius:2.5px;overflow:hidden;box-shadow:0 0 0 1px #b9cdb9;"><svg style="left:1px;top:0" width="231" height="42.5" viewBox="0 0 231 42.5"><path d="M0.0 18.8 L1.0 18.3 L2.0 17.7 L3.0 17.7 L4.0 17.3 L5.0 17.2 L6.0 17.7 L7.0 17.2 L8.0 17.0 L9.0 17.0 L10.0 16.9 L11.0 16.6 L12.0 16.6 L13.0 16.6 L14.0 16.7 L15.0 16.6 L16.0 16.7 L17.0 16.2 L18.0 16.7 L19.0 16.5 L20.0 16.7 L21.0 16.1 L22.0 16.2 L23.0 16.1 L24.0 16.7 L25.0 16.9 L26.0 16.6 L27.0 16.4 L28.0 16.8 L29.0 16.8 L30.0 16.6 L31.0 16.3 L32.0 16.3 L33.0 16.4 L34.0 16.3 L35.0 16.4 L36.0 16.6 L37.0 16.9 L38.0 16.1 L39.0 16.6 L40.0 16.1 L41.0 16.2 L42.0 16.8 L43.0 16.6 L44.0 16.9 L45.0 16.5 L46.0 16.1 L47.0 16.4 L48.0 16.6 L49.0 16.9 L50.0 16.9 L51.0 16.5 L52.0 16.4 L53.0 16.1 L54.0 16.6 L55.0 16.2 L56.0 16.2 L57.0 16.1 L58.0 16.1 L59.0 16.7 L60.0 16.2 L61.0 16.9 L62.0 16.1 L63.0 16.8 L64.0 16.2 L65.0 16.1 L66.0 16.7 L67.0 16.3 L68.0 16.7 L69.0 16.2 L70.0 16.1 L71.0 16.7 L72.0 16.7 L73.0 16.8 L74.0 16.7 L75.0 16.1 L76.0 16.6 L77.0 16.7 L78.0 16.5 L79.0 16.9 L80.0 16.3 L81.0 16.9 L82.0 16.7 L83.0 16.1 L84.0 16.1 L85.0 16.6 L86.0 16.8 L87.0 16.1 L88.0 16.3 L89.0 16.7 L90.0 16.2 L91.0 16.8 L92.0 16.5 L93.0 16.1 L94.0 16.4 L95.0 16.6 L96.0 16.4 L97.0 16.7 L98.0 16.2 L99.0 16.8 L100.0 16.4 L101.0 16.6 L102.0 16.6 L103.0 16.4 L104.0 16.4 L105.0 16.8 L106.0 16.9 L107.0 16.8 L108.0 16.6 L109.0 16.3 L110.0 16.1 L111.0 16.9 L112.0 16.7 L113.0 16.8 L114.0 16.3 L115.0 16.6 L116.0 16.9 L117.0 16.8 L118.0 16.6 L119.0 16.5 L120.0 16.7 L121.0 17.2 L122.0 17.0 L123.0 17.5 L124.0 17.7 L125.0 18.2 L126.0 18.3 L127.0 17.9 L128.0 17.6 L129.0 17.7 L130.0 17.5 L131.0 17.4 L132.0 17.4 L133.0 17.2 L134.0 16.3 L135.0 16.9 L136.0 16.8 L137.0 16.8 L138.0 16.6 L139.0 16.3 L140.0 16.8 L141.0 16.8 L142.0 16.7 L143.0 16.9 L144.0 16.4 L145.0 16.1 L146.0 16.5 L147.0 16.8 L148.0 16.2 L149.0 16.7 L150.0 16.9 L151.0 16.3 L152.0 16.6 L153.0 16.7 L154.0 16.5 L155.0 16.2 L156.0 16.3 L157.0 16.7 L158.0 16.8 L159.0 16.5 L160.0 16.1 L161.0 16.8 L162.0 16.7 L163.0 16.3 L164.0 16.6 L165.0 16.9 L166.0 16.8 L167.0 16.5 L168.0 16.5 L169.0 16.6 L170.0 16.2 L171.0 16.2 L172.0 16.2 L173.0 16.7 L174.0 16.4 L175.0 16.6 L176.0 16.4 L177.0 16.5 L178.0 16.2 L179.0 16.1 L180.0 16.9 L181.0 16.4 L182.0 16.1 L183.0 16.6 L184.0 16.8 L185.0 16.2 L186.0 16.6 L187.0 16.4 L188.0 16.5 L189.0 16.1 L190.0 16.1 L191.0 16.9 L192.0 16.8 L193.0 16.5 L194.0 16.6 L195.0 16.3 L196.0 16.8 L197.0 16.4 L198.0 16.9 L199.0 16.7 L200.0 16.8 L201.0 16.9 L202.0 16.3 L203.0 16.1 L204.0 16.2 L205.0 16.2 L206.0 16.1 L207.0 16.1 L208.0 16.6 L209.0 16.8 L210.0 16.5 L211.0 16.9 L212.0 16.9 L213.0 16.1 L214.0 16.6 L215.0 16.4 L216.0 16.2 L217.0 16.9 L218.0 16.3 L219.0 16.6 L220.0 16.6 L221.0 16.9 L222.0 16.7 L223.0 16.4 L224.0 16.5 L225.0 16.2 L226.0 16.9 L227.0 16.9 L228.0 16.2 L228.5 42.5 L0 42.5 Z" fill="#6ba575"/><path d="M0.0 18.8 L1.0 18.3 L2.0 17.7 L3.0 17.7 L4.0 17.3 L5.0 17.2 L6.0 17.7 L7.0 17.2 L8.0 17.0 L9.0 17.0 L10.0 16.9 L11.0 16.6 L12.0 16.6 L13.0 16.6 L14.0 16.7 L15.0 16.6 L16.0 16.7 L17.0 16.2 L18.0 16.7 L19.0 16.5 L20.0 16.7 L21.0 16.1 L22.0 16.2 L23.0 16.1 L24.0 16.7 L25.0 16.9 L26.0 16.6 L27.0 16.4 L28.0 16.8 L29.0 16.8 L30.0 16.6 L31.0 16.3 L32.0 16.3 L33.0 16.4 L34.0 16.3 L35.0 16.4 L36.0 16.6 L37.0 16.9 L38.0 16.1 L39.0 16.6 L40.0 16.1 L41.0 16.2 L42.0 16.8 L43.0 16.6 L44.0 16.9 L45.0 16.5 L46.0 16.1 L47.0 16.4 L48.0 16.6 L49.0 16.9 L50.0 16.9 L51.0 16.5 L52.0 16.4 L53.0 16.1 L54.0 16.6 L55.0 16.2 L56.0 16.2 L57.0 16.1 L58.0 16.1 L59.0 16.7 L60.0 16.2 L61.0 16.9 L62.0 16.1 L63.0 16.8 L64.0 16.2 L65.0 16.1 L66.0 16.7 L67.0 16.3 L68.0 16.7 L69.0 16.2 L70.0 16.1 L71.0 16.7 L72.0 16.7 L73.0 16.8 L74.0 16.7 L75.0 16.1 L76.0 16.6 L77.0 16.7 L78.0 16.5 L79.0 16.9 L80.0 16.3 L81.0 16.9 L82.0 16.7 L83.0 16.1 L84.0 16.1 L85.0 16.6 L86.0 16.8 L87.0 16.1 L88.0 16.3 L89.0 16.7 L90.0 16.2 L91.0 16.8 L92.0 16.5 L93.0 16.1 L94.0 16.4 L95.0 16.6 L96.0 16.4 L97.0 16.7 L98.0 16.2 L99.0 16.8 L100.0 16.4 L101.0 16.6 L102.0 16.6 L103.0 16.4 L104.0 16.4 L105.0 16.8 L106.0 16.9 L107.0 16.8 L108.0 16.6 L109.0 16.3 L110.0 16.1 L111.0 16.9 L112.0 16.7 L113.0 16.8 L114.0 16.3 L115.0 16.6 L116.0 16.9 L117.0 16.8 L118.0 16.6 L119.0 16.5 L120.0 16.7 L121.0 17.2 L122.0 17.0 L123.0 17.5 L124.0 17.7 L125.0 18.2 L126.0 18.3 L127.0 17.9 L128.0 17.6 L129.0 17.7 L130.0 17.5 L131.0 17.4 L132.0 17.4 L133.0 17.2 L134.0 16.3 L135.0 16.9 L136.0 16.8 L137.0 16.8 L138.0 16.6 L139.0 16.3 L140.0 16.8 L141.0 16.8 L142.0 16.7 L143.0 16.9 L144.0 16.4 L145.0 16.1 L146.0 16.5 L147.0 16.8 L148.0 16.2 L149.0 16.7 L150.0 16.9 L151.0 16.3 L152.0 16.6 L153.0 16.7 L154.0 16.5 L155.0 16.2 L156.0 16.3 L157.0 16.7 L158.0 16.8 L159.0 16.5 L160.0 16.1 L161.0 16.8 L162.0 16.7 L163.0 16.3 L164.0 16.6 L165.0 16.9 L166.0 16.8 L167.0 16.5 L168.0 16.5 L169.0 16.6 L170.0 16.2 L171.0 16.2 L172.0 16.2 L173.0 16.7 L174.0 16.4 L175.0 16.6 L176.0 16.4 L177.0 16.5 L178.0 16.2 L179.0 16.1 L180.0 16.9 L181.0 16.4 L182.0 16.1 L183.0 16.6 L184.0 16.8 L185.0 16.2 L186.0 16.6 L187.0 16.4 L188.0 16.5 L189.0 16.1 L190.0 16.1 L191.0 16.9 L192.0 16.8 L193.0 16.5 L194.0 16.6 L195.0 16.3 L196.0 16.8 L197.0 16.4 L198.0 16.9 L199.0 16.7 L200.0 16.8 L201.0 16.9 L202.0 16.3 L203.0 16.1 L204.0 16.2 L205.0 16.2 L206.0 16.1 L207.0 16.1 L208.0 16.6 L209.0 16.8 L210.0 16.5 L211.0 16.9 L212.0 16.9 L213.0 16.1 L214.0 16.6 L215.0 16.4 L216.0 16.2 L217.0 16.9 L218.0 16.3 L219.0 16.6 L220.0 16.6 L221.0 16.9 L222.0 16.7 L223.0 16.4 L224.0 16.5 L225.0 16.2 L226.0 16.9 L227.0 16.9 L228.0 16.2" fill="none" stroke="#d0cf5c" stroke-width="1.300"/></svg></div><div class="abs" style="left:3px;top:199.5px;width:231px;height:27px;background:#2f5e3a;border-radius:2.5px;overflow:hidden;border:0.6px solid #2a6a38;"><svg style="left:1px;top:0" width="231" height="27" viewBox="0 0 231 27"><path d="M0.0 15.8 L1.0 15.8 L2.0 15.7 L3.0 16.0 L4.0 15.8 L5.0 15.5 L6.0 14.6 L7.0 15.1 L8.0 14.8 L9.0 14.5 L10.0 14.6 L11.0 13.8 L12.0 13.9 L13.0 14.4 L14.0 14.6 L15.0 14.4 L16.0 14.0 L17.0 14.3 L18.0 14.4 L19.0 13.8 L20.0 14.0 L21.0 14.0 L22.0 13.9 L23.0 14.2 L24.0 13.9 L25.0 14.0 L26.0 13.9 L27.0 14.4 L28.0 13.8 L29.0 14.4 L30.0 13.9 L31.0 13.8 L32.0 14.6 L33.0 13.9 L34.0 14.6 L35.0 14.5 L36.0 14.5 L37.0 13.9 L38.0 14.2 L39.0 13.8 L40.0 14.6 L41.0 14.5 L42.0 14.3 L43.0 14.2 L44.0 14.1 L45.0 14.5 L46.0 14.2 L47.0 14.3 L48.0 13.9 L49.0 13.9 L50.0 13.8 L51.0 14.4 L52.0 14.2 L53.0 13.9 L54.0 14.5 L55.0 14.0 L56.0 14.1 L57.0 13.9 L58.0 14.0 L59.0 14.5 L60.0 14.1 L61.0 13.9 L62.0 14.2 L63.0 14.0 L64.0 14.6 L65.0 13.9 L66.0 14.6 L67.0 13.8 L68.0 14.6 L69.0 14.4 L70.0 13.9 L71.0 14.2 L72.0 14.0 L73.0 14.0 L74.0 13.9 L75.0 14.1 L76.0 14.6 L77.0 14.6 L78.0 14.6 L79.0 13.8 L80.0 14.0 L81.0 14.6 L82.0 13.8 L83.0 14.4 L84.0 14.0 L85.0 14.6 L86.0 13.8 L87.0 14.5 L88.0 14.1 L89.0 13.9 L90.0 13.8 L91.0 14.5 L92.0 14.2 L93.0 13.9 L94.0 14.1 L95.0 14.6 L96.0 13.9 L97.0 14.3 L98.0 13.9 L99.0 13.9 L100.0 14.4 L101.0 14.4 L102.0 13.9 L103.0 13.8 L104.0 13.8 L105.0 14.3 L106.0 14.2 L107.0 14.0 L108.0 13.9 L109.0 14.3 L110.0 14.4 L111.0 14.5 L112.0 14.3 L113.0 13.9 L114.0 13.8 L115.0 14.4 L116.0 14.1 L117.0 14.4 L118.0 13.8 L119.0 14.6 L120.0 14.3 L121.0 14.9 L122.0 15.1 L123.0 15.0 L124.0 14.9 L125.0 15.9 L126.0 15.7 L127.0 16.1 L128.0 15.5 L129.0 15.3 L130.0 15.6 L131.0 14.9 L132.0 14.5 L133.0 14.5 L134.0 14.5 L135.0 13.9 L136.0 14.2 L137.0 14.2 L138.0 14.2 L139.0 13.9 L140.0 14.4 L141.0 14.5 L142.0 14.5 L143.0 14.0 L144.0 14.4 L145.0 14.1 L146.0 14.4 L147.0 13.8 L148.0 14.5 L149.0 14.6 L150.0 14.2 L151.0 14.2 L152.0 14.2 L153.0 14.2 L154.0 13.8 L155.0 14.6 L156.0 14.0 L157.0 13.9 L158.0 13.8 L159.0 14.0 L160.0 14.5 L161.0 13.8 L162.0 13.8 L163.0 14.4 L164.0 13.9 L165.0 13.8 L166.0 14.3 L167.0 14.3 L168.0 14.2 L169.0 14.4 L170.0 13.8 L171.0 14.5 L172.0 14.4 L173.0 13.8 L174.0 13.9 L175.0 14.2 L176.0 14.2 L177.0 14.0 L178.0 13.9 L179.0 14.1 L180.0 13.9 L181.0 14.3 L182.0 14.5 L183.0 13.9 L184.0 14.3 L185.0 14.4 L186.0 13.9 L187.0 14.5 L188.0 14.6 L189.0 14.1 L190.0 14.1 L191.0 14.5 L192.0 14.2 L193.0 14.1 L194.0 14.6 L195.0 14.4 L196.0 14.1 L197.0 14.0 L198.0 14.1 L199.0 14.1 L200.0 14.6 L201.0 14.5 L202.0 14.6 L203.0 14.5 L204.0 14.5 L205.0 13.8 L206.0 14.2 L207.0 14.6 L208.0 14.6 L209.0 14.0 L210.0 14.1 L211.0 14.3 L212.0 14.1 L213.0 14.2 L214.0 13.8 L215.0 14.1 L216.0 14.2 L217.0 13.8 L218.0 13.9 L219.0 14.6 L220.0 14.4 L221.0 14.6 L222.0 14.3 L223.0 14.5 L224.0 14.5 L225.0 14.5 L226.0 13.8 L227.0 14.3 L228.0 14.0 L228.5 27.0 L0 27.0 Z" fill="#6ba575"/><path d="M0.0 15.8 L1.0 15.8 L2.0 15.7 L3.0 16.0 L4.0 15.8 L5.0 15.5 L6.0 14.6 L7.0 15.1 L8.0 14.8 L9.0 14.5 L10.0 14.6 L11.0 13.8 L12.0 13.9 L13.0 14.4 L14.0 14.6 L15.0 14.4 L16.0 14.0 L17.0 14.3 L18.0 14.4 L19.0 13.8 L20.0 14.0 L21.0 14.0 L22.0 13.9 L23.0 14.2 L24.0 13.9 L25.0 14.0 L26.0 13.9 L27.0 14.4 L28.0 13.8 L29.0 14.4 L30.0 13.9 L31.0 13.8 L32.0 14.6 L33.0 13.9 L34.0 14.6 L35.0 14.5 L36.0 14.5 L37.0 13.9 L38.0 14.2 L39.0 13.8 L40.0 14.6 L41.0 14.5 L42.0 14.3 L43.0 14.2 L44.0 14.1 L45.0 14.5 L46.0 14.2 L47.0 14.3 L48.0 13.9 L49.0 13.9 L50.0 13.8 L51.0 14.4 L52.0 14.2 L53.0 13.9 L54.0 14.5 L55.0 14.0 L56.0 14.1 L57.0 13.9 L58.0 14.0 L59.0 14.5 L60.0 14.1 L61.0 13.9 L62.0 14.2 L63.0 14.0 L64.0 14.6 L65.0 13.9 L66.0 14.6 L67.0 13.8 L68.0 14.6 L69.0 14.4 L70.0 13.9 L71.0 14.2 L72.0 14.0 L73.0 14.0 L74.0 13.9 L75.0 14.1 L76.0 14.6 L77.0 14.6 L78.0 14.6 L79.0 13.8 L80.0 14.0 L81.0 14.6 L82.0 13.8 L83.0 14.4 L84.0 14.0 L85.0 14.6 L86.0 13.8 L87.0 14.5 L88.0 14.1 L89.0 13.9 L90.0 13.8 L91.0 14.5 L92.0 14.2 L93.0 13.9 L94.0 14.1 L95.0 14.6 L96.0 13.9 L97.0 14.3 L98.0 13.9 L99.0 13.9 L100.0 14.4 L101.0 14.4 L102.0 13.9 L103.0 13.8 L104.0 13.8 L105.0 14.3 L106.0 14.2 L107.0 14.0 L108.0 13.9 L109.0 14.3 L110.0 14.4 L111.0 14.5 L112.0 14.3 L113.0 13.9 L114.0 13.8 L115.0 14.4 L116.0 14.1 L117.0 14.4 L118.0 13.8 L119.0 14.6 L120.0 14.3 L121.0 14.9 L122.0 15.1 L123.0 15.0 L124.0 14.9 L125.0 15.9 L126.0 15.7 L127.0 16.1 L128.0 15.5 L129.0 15.3 L130.0 15.6 L131.0 14.9 L132.0 14.5 L133.0 14.5 L134.0 14.5 L135.0 13.9 L136.0 14.2 L137.0 14.2 L138.0 14.2 L139.0 13.9 L140.0 14.4 L141.0 14.5 L142.0 14.5 L143.0 14.0 L144.0 14.4 L145.0 14.1 L146.0 14.4 L147.0 13.8 L148.0 14.5 L149.0 14.6 L150.0 14.2 L151.0 14.2 L152.0 14.2 L153.0 14.2 L154.0 13.8 L155.0 14.6 L156.0 14.0 L157.0 13.9 L158.0 13.8 L159.0 14.0 L160.0 14.5 L161.0 13.8 L162.0 13.8 L163.0 14.4 L164.0 13.9 L165.0 13.8 L166.0 14.3 L167.0 14.3 L168.0 14.2 L169.0 14.4 L170.0 13.8 L171.0 14.5 L172.0 14.4 L173.0 13.8 L174.0 13.9 L175.0 14.2 L176.0 14.2 L177.0 14.0 L178.0 13.9 L179.0 14.1 L180.0 13.9 L181.0 14.3 L182.0 14.5 L183.0 13.9 L184.0 14.3 L185.0 14.4 L186.0 13.9 L187.0 14.5 L188.0 14.6 L189.0 14.1 L190.0 14.1 L191.0 14.5 L192.0 14.2 L193.0 14.1 L194.0 14.6 L195.0 14.4 L196.0 14.1 L197.0 14.0 L198.0 14.1 L199.0 14.1 L200.0 14.6 L201.0 14.5 L202.0 14.6 L203.0 14.5 L204.0 14.5 L205.0 13.8 L206.0 14.2 L207.0 14.6 L208.0 14.6 L209.0 14.0 L210.0 14.1 L211.0 14.3 L212.0 14.1 L213.0 14.2 L214.0 13.8 L215.0 14.1 L216.0 14.2 L217.0 13.8 L218.0 13.9 L219.0 14.6 L220.0 14.4 L221.0 14.6 L222.0 14.3 L223.0 14.5 L224.0 14.5 L225.0 14.5 L226.0 13.8 L227.0 14.3 L228.0 14.0" fill="none" stroke="#d0cf5c" stroke-width="1.300"/></svg></div><svg style="left:5px;top:157.5px" width="8" height="8" viewBox="0 0 8 8"><rect x=".5" y=".5" width="7" height="7" rx="1.4" fill="none" stroke="#f2f2f2" stroke-width=".9"/><path d="M2 4.1l1.4 1.6L6.1 2.2" fill="none" stroke="#f2f2f2" stroke-width="1"/></svg><span class="t b" style="left:17px;top:158.4px;font-size:6.450px;color:#f2f2f2">ミュージック-1</span><span class="t b" style="left:146.5px;top:158.3px;font-size:6.6px;color:#f2f2f2">ステレオ</span><svg style="left:177.5px;top:160px" width="6" height="4" viewBox="0 0 6 4" fill="none" stroke="#e8e8e8" stroke-width="1"><path d="M.7.7L3 3.1 5.3.7"/></svg><svg style="left:5px;top:201.3px" width="8" height="8" viewBox="0 0 8 8"><rect x=".5" y=".5" width="7" height="7" rx="1.4" fill="none" stroke="#f2f2f2" stroke-width=".9"/><path d="M2 4.1l1.4 1.6L6.1 2.2" fill="none" stroke="#f2f2f2" stroke-width="1"/></svg><span class="t b" style="left:17px;top:202.2px;font-size:6.450px;color:#f2f2f2">ミュージック-1</span><svg style="left:68.5px;top:204px" width="6" height="4" viewBox="0 0 6 4" fill="none" stroke="#e8e8e8" stroke-width="1"><path d="M.7.7L3 3.1 5.3.7"/></svg><svg style="left:162px;top:201.6px" width="13" height="7" viewBox="0 0 13 7"><rect width="13" height="7" rx="1" fill="#c5eccb"/><path d="M7.2 2.4h1.6L11 .9v5.2L8.800 4.600H7.200z" fill="#2f5e3a"/><path d="M2 2.400q1.200-1.400 2.400 0 0 1-2.400 2.400h2.600" fill="none" stroke="#2f5e3a" stroke-width=".8"/></svg><div class="abs" style="left:0;top:251.5px;width:238px;height:1px;background:#121212"></div><div class="abs b" style="left:131px;top:255.3px;width:98px;height:10px;border-radius:2.5px;background:#4c4c4c;text-align:center;font-size:6.050px;line-height:10.400px;color:#e6e6e6">エフェクトプリセットを保存</div></div>
<!-- timeline -->
<div id="tlbar" class="abs"><span class="t b" style="left:-3.5px;top:5.6px;font-size:7.4px;color:#ececec">インデックス</span><svg style="left:55px;top:4px" width="12" height="11" viewBox="0 0 12 11" fill="none" stroke="#a6a6a6" stroke-width=".9"><rect x="3" y=".8" width="6" height="4.400" rx=".5"/><rect x=".8" y="7.300" width="10.400" height="2.700" rx=".5" fill="#a6a6a6" fill-opacity=".6" stroke-opacity=".7"/></svg><svg style="left:74px;top:4px" width="12" height="11" viewBox="0 0 12 11" fill="none" stroke="#a6a6a6" stroke-width=".9"><rect x="3" y=".8" width="6" height="4.400" rx=".5"/><rect x=".8" y="7.300" width="10.400" height="2.700" rx=".5" fill="#a6a6a6" fill-opacity=".6" stroke-opacity=".7"/><path d="M6 7.200v2.900" stroke="#2d2d2d" stroke-width="1.600"/></svg><svg style="left:91px;top:4px" width="12" height="11" viewBox="0 0 12 11" fill="none" stroke="#a6a6a6" stroke-width=".9"><rect x="3" y=".8" width="6" height="4.400" rx=".5"/><rect x=".8" y="7.300" width="10.400" height="2.700" rx=".5" fill="#a6a6a6" fill-opacity=".6" stroke-opacity=".7"/><path d="M9.500 7.200v2.900" stroke="#2d2d2d" stroke-width="1.200"/></svg><svg style="left:110px;top:4px" width="12" height="11" viewBox="0 0 12 11" fill="none" stroke="#a6a6a6" stroke-width=".9"><rect x="3" y=".8" width="6" height="4.400" rx=".5"/><rect x=".8" y="7.300" width="10.400" height="2.700" rx=".5" fill="#a6a6a6" fill-opacity=".6" stroke-opacity=".7"/><rect x="2.500" y="7" width="7" height="3.300" fill="#e6e6e6" stroke="none"/></svg><svg style="left:123px;top:9px" width="5" height="4" viewBox="0 0 5 4" fill="none" stroke="#7c7c7c" stroke-width="1"><path d="M.6.800l1.900 2 1.900-2"/></svg><svg style="left:145.500px;top:4.500px" width="7" height="10" viewBox="0 0 7 10"><path d="M.6.400v7.400l1.900-1.700L3.700 9l1.300-.5-1.200-2.800h2.500z" fill="#5c5c5c"/></svg><svg style="left:155px;top:9px" width="5" height="4" viewBox="0 0 5 4" fill="none" stroke="#8c8c8c" stroke-width="1"><path d="M.6.800l1.900 2 1.900-2"/></svg><svg style="left:390.500px;top:7px" width="4" height="6" viewBox="0 0 4 6" fill="none" stroke="#9a9a9a" stroke-width="1.100"><path d="M3.300 .600L.9 3 3.300 5.400"/></svg><span class="t" style="left:417px;top:5.700px;font-size:7.000px;color:#e2e2e2">名称未設定プロジェクト</span><svg style="left:501.500px;top:8px" width="5" height="4" viewBox="0 0 5 4" fill="#555"><path d="M0 .5h5L2.500 3.500z"/></svg><span class="t" style="left:515.500px;top:5.300px;font-size:7.850px;color:#c9a93c">02:35:07</span><span class="t" style="left:547.500px;top:5.300px;font-size:7.850px;color:#7d7d7d">/ 02:35:07</span><svg style="left:602px;top:7px" width="4" height="6" viewBox="0 0 4 6" fill="none" stroke="#a4a4a4" stroke-width="1.100"><path d="M.7 .600L3.100 3 .7 5.400"/></svg><svg style="left:873.5px;top:5px" width="11" height="9" viewBox="0 0 11 9" fill="none" stroke="#5e5e5e" stroke-width="1"><path d="M5.500 0v9M0 4.500h3.800M7.200 4.500H11M2.500 2.500v4M8.500 2.500v4"/></svg><svg style="left:890.5px;top:5px" width="11" height="9" viewBox="0 0 11 9" fill="none" stroke="#5e5e5e" stroke-width="1"><path d="M5.500 0v9M0 4.500h3.800M7.200 4.500H11M8.500 2.500v4" opacity=".7"/></svg><svg style="left:907.5px;top:5px" width="11" height="9" viewBox="0 0 11 9" fill="none" stroke="#5e5e5e" stroke-width="1"><path d="M1.500 7V4.500a4 4 0 018 0V7"/><rect x=".8" y="5" width="2" height="3.200" fill="#5e5e5e"/><rect x="8.200" y="5" width="2" height="3.200" fill="#5e5e5e"/></svg><svg style="left:924.5px;top:5px" width="11" height="9" viewBox="0 0 11 9" fill="none" stroke="#5e5e5e" stroke-width="1"><rect x=".5" y="2.500" width="10" height="4" fill="#5e5e5e"/><path d="M5.500 0v9" stroke="#2d2d2d"/></svg><svg style="left:947px;top:4.500px" width="10" height="10" viewBox="0 0 10 10"><rect x=".6" y=".4" width="8.800" height="7.200" rx="1.200" fill="#ececec"/><rect x="2.200" y="1.800" width="5.600" height="1.500" fill="#2b2b2b"/><rect x="2.200" y="4.400" width="5.600" height="1.500" fill="#2b2b2b"/><path d="M3.400 7.600h3.200L5 9.600z" fill="#ececec"/></svg><div class="abs" style="left:965px;top:2px;width:1px;height:15px;background:#1c1c1c"></div><svg style="left:972.500px;top:5px" width="11" height="9" viewBox="0 0 11 9" fill="none" stroke="#6a6a6a" stroke-width="1"><rect x="2.500" y=".5" width="8" height="5.500" rx=".8"/><rect x=".5" y="3" width="8" height="5.500" rx=".8" fill="#4a4a4a"/></svg><svg style="left:990.500px;top:5px" width="11" height="9" viewBox="0 0 11 9" fill="none" stroke="#6a6a6a" stroke-width="1"><path d="M.5.800L6 4.500.5 8.200zM11 .800L5.500 4.500 11 8.200"/></svg></div><div id="tl" class="abs"><div class="abs" style="left:0;top:0;width:18px;height:211px;background:#1b1b1b"></div><div class="abs" style="left:17.5px;top:2.500px;width:1px;height:8px;background:#555"></div><span class="t" style="left:24.0px;top:3.200px;font-size:7.100px;color:#6c6c6c">00:00:00:00</span><div class="abs" style="left:250.5px;top:2.500px;width:1px;height:8px;background:#555"></div><span class="t" style="left:257.0px;top:3.200px;font-size:7.100px;color:#6c6c6c">00:00:02:00</span><div class="abs" style="left:483.5px;top:2.500px;width:1px;height:8px;background:#555"></div><span class="t" style="left:490.0px;top:3.200px;font-size:7.100px;color:#6c6c6c">00:00:04:00</span><div class="abs" style="left:716px;top:2.500px;width:1px;height:8px;background:#555"></div><span class="t" style="left:722.5px;top:3.200px;font-size:7.100px;color:#6c6c6c">00:00:06:00</span><div class="abs" style="left:133.5px;top:3px;width:1px;height:6px;background:#2c2c2c"></div><div class="abs" style="left:367px;top:3px;width:1px;height:6px;background:#2c2c2c"></div><div class="abs" style="left:600px;top:3px;width:1px;height:6px;background:#2c2c2c"></div><div class="abs" style="left:18px;top:87px;width:586px;height:9.500px;background:#5a3a96;border-radius:1.500px 3.500px 3.500px 1.500px"></div><span class="t" style="left:20px;top:89.30000000000001px;font-size:5.200px;color:#d9c8f4">カスタム</span><div class="abs" style="left:18px;top:99.5px;width:1.500px;height:1.500px;background:#8a4ad0"></div><div class="abs" style="left:18px;top:102px;width:348px;height:46.500px;background:#263d69;border-radius:2px;overflow:hidden"><span class="t" style="left:2px;top:1.700px;font-size:6.500px;color:#b2c4ea">C0369.MP4</span><div class="abs" style="left:0;top:9.500px;width:348px;height:24px;background-color:#a4a4a4;background-image:linear-gradient(180deg,rgba(255,255,255,.06) 0%,rgba(0,0,0,0) 45%,rgba(0,0,0,.10) 100%),linear-gradient(90deg,#888686 0%,#a09e9e 7%,#abaaaa 30%,#b0aeae 58%,#a5a3a3 88%,#929090 100%);background-size:100% 100%,43.400px 24px;background-position:0 0,0px 0"></div><div class="abs" style="left:0;top:45px;width:348px;height:1px;background:#3a5488"></div></div><div class="abs" style="left:367.5px;top:102px;width:396px;height:46.500px;background:#263d69;border-radius:2px;overflow:hidden"><span class="t" style="left:2px;top:1.700px;font-size:6.500px;color:#b2c4ea">C0402.MP4</span><svg style="left:0;top:9.500px" width="396" height="24" viewBox="0 0 396 24"><defs><filter id="nz" x="0" y="0" width="100%" height="100%"><feTurbulence type="fractalNoise" baseFrequency="0.420 0.480" numOctaves="2" seed="11" result="n"/><feColorMatrix in="n" type="matrix" values="0 0 0 0 0  0 0 0 0 0  0 0 0 0 0  3.400 1.600 0 0 -2.550"/><feComposite operator="in" in="SourceGraphic"/></filter><filter id="nz2" x="0" y="0" width="100%" height="100%"><feTurbulence type="fractalNoise" baseFrequency="0.170 0.210" numOctaves="3" seed="4" result="n"/><feColorMatrix in="n" type="matrix" values="0 0 0 0 0  0 0 0 0 0  0 0 0 0 0  3.400 2.000 0 0 -2.250"/><feComposite operator="in" in="SourceGraphic"/></filter><filter id="nzd" x="0" y="0" width="100%" height="100%"><feTurbulence type="fractalNoise" baseFrequency="0.220 0.300" numOctaves="2" seed="23" result="n"/><feColorMatrix in="n" type="matrix" values="0 0 0 0 0  0 0 0 0 0  0 0 0 0 0  2.400 1.400 0 0 -1.750"/><feComposite operator="in" in="SourceGraphic"/></filter><radialGradient id="pg"><stop offset="0" stop-color="#fff"/><stop offset=".55" stop-color="#fff" stop-opacity=".75"/><stop offset="1" stop-color="#fff" stop-opacity="0"/></radialGradient><pattern id="ptile" width="44.400" height="24" patternUnits="userSpaceOnUse"><rect width="44.400" height="24" fill="#8d8d7f"/><ellipse cx="33" cy="11" rx="12" ry="13" fill="url(#pg)" opacity=".25"/></pattern><pattern id="pmask" width="44.400" height="24" patternUnits="userSpaceOnUse"><rect width="44.400" height="24" fill="#000"/><ellipse cx="33" cy="11.500" rx="12.500" ry="14" fill="url(#pg)"/></pattern><mask id="mk"><rect width="396" height="24" fill="url(#pmask)"/></mask></defs><rect width="396" height="24" fill="url(#ptile)"/><rect width="396" height="24" fill="#77776a" filter="url(#nzd)" opacity=".55"/><rect width="396" height="24" fill="#d4d4d0" filter="url(#nz)" opacity=".6"/><g mask="url(#mk)"><rect width="396" height="24" fill="#f3f3f1" filter="url(#nz2)"/></g></svg><div class="abs" style="left:0;top:45px;width:396px;height:1px;background:#3a5488"></div></div><div class="abs" style="left:18px;top:150px;width:1.500px;height:1.500px;background:#4a9a4a"></div><div class="abs" style="left:18px;top:153.3px;width:746px;height:19.800px;background:#2a5734;border-radius:2.500px;overflow:hidden;border:1px solid #d4d8d0;border-right:none"><svg style="left:0;top:0" width="746" height="18" viewBox="0 0 746 18"><path d="M0 19 L0 18 L12 18 L13 12.800 L14.0 11.4 L24.0 12.1 L25.0 12.400 L25.0 12.2 L29.4 12.4 L32.9 10.3 L40.0 11.0 L41.0 12.400 L41.0 12.1 L45.3 10.7 L48.8 11.4 L49.8 12.400 L49.8 12.6 L54.4 12.1 L57.4 12.1 L62.3 12.2 L66.7 11.8 L74.7 12.5 L75.7 12.400 L75.7 12.3 L79.2 10.4 L91.7 11.1 L92.7 12.400 L92.7 11.5 L98.0 12.2 L99.0 12.400 L99.0 12.7 L103.2 12.5 L107.4 11.1 L119.5 11.8 L120.5 12.400 L120.5 11.8 L133.3 12.5 L134.3 12.400 L134.3 12.3 L137.7 12.7 L140.8 12.300 L141.6 12.300 L144.1 16.200 L146.4 12.300 L147.8 11.4 L161.7 12.1 L162.7 12.400 L162.7 12.4 L166.4 12.2 L170.2 12.5 L172.8 10.9 L186.0 11.6 L187.0 12.400 L187.0 12.5 L189.9 10.4 L201.8 11.1 L202.8 12.400 L202.8 12.3 L206.9 12.7 L211.7 12.7 L216.6 12.7 L220.1 12.2 L224.7 10.4 L236.6 11.1 L237.6 12.400 L237.6 12.4 L242.1 12.300 L242.9 12.300 L245.4 16.200 L247.7 12.300 L249.1 10.8 L256.7 11.5 L257.7 12.400 L257.7 10.4 L264.4 11.1 L265.4 12.400 L265.4 12.7 L269.7 12.2 L274.5 12.6 L276.6 11.6 L288.4 12.3 L289.4 12.400 L289.4 12.5 L292.7 12.6 L295.6 12.2 L299.9 12.300 L300.7 12.300 L303.2 16.200 L305.5 12.300 L306.9 12.7 L309.0 12.5 L313.5 12.2 L316.7 12.7 L319.1 10.5 L322.4 11.2 L323.4 12.400 L323.4 12.1 L328.0 12.1 L331.6 11.1 L337.0 11.8 L338.0 12.400 L338.0 10.6 L345.2 11.3 L346.2 12.400 L346.2 12.4 L348.3 12.7 L352.7 12.1 L356.1 12.300 L356.9 12.300 L359.4 16.200 L361.7 12.300 L363.1 12.2 L367.2 11.4 L373.6 12.1 L374.6 12.400 L374.6 12.300 L375.4 12.300 L377.9 16.200 L380.2 12.300 L381.6 12.3 L386.3 11.1 L395.4 11.8 L396.4 12.400 L396.4 12.1 L400.2 12.6 L405.1 11.4 L413.9 12.1 L414.9 12.400 L414.9 12.1 L419.3 12.3 L422.3 12.1 L424.5 12.300 L425.3 12.300 L427.8 16.200 L430.1 12.300 L431.5 12.6 L434.8 12.1 L438.8 12.4 L441.9 12.2 L444.1 12.2 L448.2 12.6 L451.6 10.9 L459.9 11.6 L460.9 12.400 L460.9 12.7 L463.2 12.4 L467.3 12.6 L471.2 12.5 L475.8 12.5 L478.5 12.3 L482.4 12.7 L487.3 12.300 L488.1 12.300 L490.6 16.200 L492.9 12.300 L494.3 10.8 L501.6 11.5 L502.6 12.400 L502.6 11.2 L506.5 11.9 L507.5 12.400 L507.5 11.8 L518.7 12.5 L519.7 12.400 L519.7 12.1 L524.5 12.2 L527.6 12.5 L530.3 12.3 L533.1 12.2 L537.1 11.3 L543.2 12.0 L544.2 12.400 L544.2 12.7 L547.6 12.5 L550.4 10.9 L556.4 11.6 L557.4 12.400 L557.4 11.8 L560.8 12.5 L561.8 12.400 L561.8 12.7 L565.9 12.300 L566.7 12.300 L569.2 16.200 L571.5 12.300 L572.9 12.1 L576.8 12.2 L578.8 12.1 L581.7 12.7 L584.8 11.6 L596.9 12.3 L597.9 12.400 L597.9 12.1 L600.4 12.4 L603.1 12.6 L607.9 12.1 L611.6 11.7 L622.8 12.4 L623.8 12.400 L623.8 12.2 L626.0 12.5 L629.9 12.6 L632.9 10.9 L639.2 11.6 L640.2 12.400 L640.2 12.7 L642.4 12.300 L643.2 12.300 L645.7 16.200 L648.0 12.300 L649.4 12.5 L651.9 10.4 L655.4 11.1 L656.4 12.400 L656.4 12.5 L660.3 10.5 L673.6 11.2 L674.6 12.400 L674.6 12.3 L678.6 12.4 L680.9 12.2 L683.0 12.4 L686.9 11.4 L695.3 12.1 L696.3 12.400 L696.3 11.7 L708.2 12.4 L709.2 12.400 L709.2 12.5 L711.8 12.7 L715.4 12.7 L718.6 12.7 L723.0 12.300 L723.8 12.300 L726.3 16.200 L728.6 12.300 L730.0 12.5 L733.8 12.5 L736.3 12.4 L740.9 11.9 L750.0 12.6 L751.0 12.400 L746 12.400 L746 19 Z" fill="#52915f"/></svg><span class="t" style="left:1.500px;top:0.400px;font-size:6.450px;color:#93dba0">Easy Money by Motor City Classics Vol. 2</span><div class="abs" style="left:4.8px;top:8.300px;width:4.400px;height:4.400px;background:#f1e23a;transform:rotate(45deg) scale(.78);border-radius:.8px"></div><div class="abs" style="left:12.8px;top:8.300px;width:4.400px;height:4.400px;background:#f1e23a;transform:rotate(45deg) scale(.78);border-radius:.8px"></div><div class="abs" style="left:149.8px;top:8.300px;width:4.400px;height:4.400px;background:#f4f4f4;transform:rotate(45deg) scale(.78);border-radius:.8px"></div><div class="abs" style="left:245.3px;top:8.300px;width:4.400px;height:4.400px;background:#f4f4f4;transform:rotate(45deg) scale(.78);border-radius:.8px"></div><div class="abs" style="left:251.8px;top:8.300px;width:4.400px;height:4.400px;background:#f4f4f4;transform:rotate(45deg) scale(.78);border-radius:.8px"></div></div><div class="abs" style="left:175.600px;top:6px;width:1.200px;height:205px;background:#a9a9a9"></div><svg style="left:173px;top:2px" width="7" height="9" viewBox="0 0 7 9"><path d="M.5 1.500Q.5.500 1.500.500h4q1 0 1 1v4L3.500 8.400.5 5.500z" fill="#4a4a4a" stroke="#c4c4c4" stroke-width=".9"/></svg></div>
<!-- transitions -->
<div id="tr" class="abs"><div class="abs" style="left:0;top:0;width:236px;height:12.500px;background:#2d2d2d;border-bottom:1px solid #161616"></div><span class="t b" style="left:3px;top:2.600px;font-size:6.950px;color:#e4e4e4">トランジション</span><span class="t b" style="left:115px;top:2.600px;font-size:7.150px;color:#e4e4e4">インストール済みトランジション</span><svg style="left:228.5px;top:2.500px" width="4" height="8" viewBox="0 0 4 8" fill="none" stroke="#5a5a5a" stroke-width=".9"><path d="M.5 3L2 1.300 3.500 3M.5 5L2 6.700 3.500 5"/></svg><div class="abs" style="left:0;top:13.500px;width:96px;height:198px;background:#1d1d1d;border-right:1px solid #141414"></div><span class="li" style="top:19.70px;left:6px">RN Luma Fade Transiti...</span><div class="abs" style="left:0;top:29.85px;width:89px;height:15.650px;background:#202020"></div><span class="li" style="top:35.35px;left:4px">360 Distort Transitions...</span><span class="li" style="top:51.00px;left:4px">360°</span><div class="abs" style="left:0;top:61.15px;width:89px;height:15.650px;background:#202020"></div><span class="li" style="top:66.65px;left:4px">Camera Pan Transition...</span><span class="li" style="top:82.30px;left:4px">Custom</span><div class="abs" style="left:0;top:92.45px;width:89px;height:15.650px;background:#202020"></div><span class="li" style="top:97.95px;left:4px">Free Fast Pan Transitio...</span><span class="li" style="top:113.60px;left:4px">Free Glitch Pack</span><div class="abs" style="left:0;top:123.75px;width:89px;height:15.650px;background:#202020"></div><span class="li" style="top:129.25px;left:4px">Free Perspective Trans...</span><span class="li" style="top:144.90px;left:4px">Free Shake Transition</span><div class="abs" style="left:0;top:155.05px;width:89px;height:15.650px;background:#202020"></div><span class="li" style="top:160.55px;left:4px">Free Tear Transitions</span><span class="li" style="top:176.20px;left:4px">Free Twirl Transition</span><div class="abs" style="left:0;top:186.35px;width:89px;height:15.650px;background:#202020"></div><span class="li" style="top:191.85px;left:4px">Light Leak Transitions...</span><span class="li" style="top:207.50px;left:4px">Quick Blur Transitions</span><div class="abs" style="left:90.5px;top:20px;width:4.500px;height:92px;border-radius:2.500px;background:#555"></div><svg width="0" height="0" style="left:0;top:0"><defs><filter id="tb" x="-5%" y="-5%" width="110%" height="110%"><feGaussianBlur stdDeviation="0.450"/></filter></defs></svg><div class="abs" style="left:104.5px;top:23.5px;width:59px;height:33.5px;overflow:hidden;box-shadow:0 0 0 1px #cfcfd4;border-radius:1px;"><svg style="left:0;top:0" width="59" height="33.5" viewBox="0 0 59 33.5"><defs><linearGradient id="gc" x1="0" y1="0" x2="1" y2="1"><stop offset="0" stop-color="#9d90a4"/><stop offset=".45" stop-color="#857a98"/><stop offset="1" stop-color="#756c90"/></linearGradient></defs><rect width="59" height="33.5" fill="url(#gc)"/><path d="M7.1 0 L17.7 0 L13.0 33.5 L1.2 33.5 Z" fill="#c2b4bf" opacity=".45"/><g fill="#44427a" opacity=".8" filter="url(#tb)"><path d="M11.8 4.0 L13.9 8.0 L12.9 7.0 L14.7 12.1 L13.3 11.1 L15.6 16.1 L13.8 15.1 L16.5 20.1 L14.3 19.1 L17.4 24.1 L14.7 23.1 L18.3 28.1 L5.3 28.1 L8.9 23.1 L6.2 24.1 L9.3 19.1 L7.1 20.1 L9.8 15.1 L8.0 16.1 L10.3 11.1 L8.9 12.1 L10.7 7.0 L9.7 8.0Z"/><path d="M32.5 1.7 L34.9 6.1 L33.7 5.0 L35.9 10.5 L34.3 9.4 L37.0 14.9 L34.8 13.8 L38.0 19.3 L35.3 18.2 L39.1 23.7 L35.9 22.6 L40.1 28.1 L24.8 28.1 L29.0 22.6 L25.8 23.7 L29.6 18.2 L26.9 19.3 L30.1 13.8 L27.9 14.9 L30.6 9.4 L29.0 10.5 L31.2 5.0 L30.0 6.1Z"/><path d="M50.1 3.0 L52.9 7.2 L51.6 6.2 L54.0 11.4 L52.2 10.3 L55.2 15.6 L52.8 14.5 L56.4 19.8 L53.4 18.7 L57.5 24.0 L54.0 22.9 L58.7 28.1 L41.6 28.1 L46.3 22.9 L42.8 24.0 L46.9 18.7 L43.9 19.8 L47.5 14.5 L45.1 15.6 L48.1 10.3 L46.3 11.4 L48.7 6.2 L47.4 7.2Z"/><path d="M22.4 13.4 L23.8 15.9 L23.1 15.2 L24.4 18.3 L23.5 17.7 L25.0 20.8 L23.8 20.2 L25.6 23.2 L24.1 22.6 L26.2 25.7 L24.4 25.1 L26.8 28.1 L18.0 28.1 L20.4 25.1 L18.6 25.7 L20.7 22.6 L19.2 23.2 L21.1 20.2 L19.8 20.8 L21.4 17.7 L20.4 18.3 L21.7 15.2 L21.0 15.9Z"/><path d="M41.3 14.1 L42.6 16.4 L42.0 15.8 L43.2 18.8 L42.3 18.2 L43.7 21.1 L42.6 20.5 L44.3 23.4 L42.9 22.9 L44.9 25.8 L43.2 25.2 L45.4 28.1 L37.2 28.1 L39.4 25.2 L37.7 25.8 L39.7 22.9 L38.3 23.4 L40.0 20.5 L38.9 21.1 L40.3 18.2 L39.4 18.8 L40.6 15.8 L40.0 16.4Z"/><path d="M3.0 15.1 L4.1 17.3 L3.5 16.7 L4.6 19.4 L3.8 18.9 L5.0 21.6 L4.0 21.1 L5.5 23.8 L4.3 23.2 L6.0 26.0 L4.5 25.4 L6.5 28.1 L-0.6 28.1 L1.4 25.4 L-0.1 26.0 L1.6 23.2 L0.4 23.8 L1.9 21.1 L0.9 21.6 L2.1 18.9 L1.3 19.4 L2.4 16.7 L1.8 17.3Z"/><path d="M0 22.1 Q7.1 18.8 14.8 21.4 T29.5 20.8 T59.0 21.4 V28.8 H0Z"/></g><rect y="28.474999999999998" width="59" height="5.0249999999999995" fill="#a39cc0" opacity=".85"/><rect width="59" height="33.5" fill="#9b90a8" opacity=".18"/></svg></div><div class="abs" style="left:170.5px;top:24px;width:58px;height:32.5px;overflow:hidden;"><svg style="left:0;top:0" width="58" height="32.5" viewBox="0 0 58 32.5"><defs><linearGradient id="go" x1="0" y1="0" x2="1" y2="1"><stop offset="0" stop-color="#8a4f27"/><stop offset=".5" stop-color="#72401f"/><stop offset="1" stop-color="#5e3219"/></linearGradient></defs><rect width="58" height="32.5" fill="url(#go)"/><path d="M7.0 0 L17.4 0 L12.8 32.5 L1.2 32.5 Z" fill="#b87a3c" opacity=".45"/><g fill="#2a1208" opacity=".9" filter="url(#tb)"><path d="M11.6 3.9 L13.6 7.8 L12.7 6.8 L14.5 11.7 L13.1 10.7 L15.4 15.6 L13.6 14.6 L16.2 19.5 L14.0 18.5 L17.1 23.4 L14.5 22.4 L18.0 27.3 L5.2 27.3 L8.7 22.4 L6.1 23.4 L9.2 18.5 L7.0 19.5 L9.6 14.6 L7.8 15.6 L10.1 10.7 L8.7 11.7 L10.5 6.8 L9.6 7.8Z"/><path d="M31.9 1.6 L34.3 5.9 L33.1 4.8 L35.3 10.2 L33.7 9.1 L36.3 14.5 L34.2 13.4 L37.4 18.7 L34.7 17.7 L38.4 23.0 L35.3 22.0 L39.4 27.3 L24.4 27.3 L28.5 22.0 L25.4 23.0 L29.1 17.7 L26.4 18.7 L29.6 13.4 L27.5 14.5 L30.1 9.1 L28.5 10.2 L30.7 4.8 L29.5 5.9Z"/><path d="M49.3 2.9 L52.0 7.0 L50.7 6.0 L53.1 11.1 L51.3 10.0 L54.3 15.1 L51.9 14.1 L55.4 19.2 L52.5 18.2 L56.6 23.2 L53.1 22.2 L57.7 27.3 L40.9 27.3 L45.5 22.2 L42.0 23.2 L46.1 18.2 L43.2 19.2 L46.7 14.1 L44.3 15.1 L47.3 10.0 L45.5 11.1 L47.9 6.0 L46.6 7.0Z"/><path d="M22.0 13.0 L23.4 15.4 L22.8 14.8 L24.0 17.8 L23.1 17.2 L24.6 20.1 L23.4 19.6 L25.2 22.5 L23.7 21.9 L25.8 24.9 L24.0 24.3 L26.4 27.3 L17.7 27.3 L20.1 24.3 L18.3 24.9 L20.4 21.9 L18.9 22.5 L20.7 19.6 L19.5 20.1 L21.0 17.2 L20.1 17.8 L21.3 14.8 L20.7 15.4Z"/><path d="M40.6 13.7 L41.9 15.9 L41.3 15.4 L42.4 18.2 L41.6 17.6 L43.0 20.5 L41.8 19.9 L43.6 22.8 L42.1 22.2 L44.1 25.0 L42.4 24.5 L44.7 27.3 L36.5 27.3 L38.8 24.5 L37.1 25.0 L39.1 22.2 L37.6 22.8 L39.4 19.9 L38.2 20.5 L39.6 17.6 L38.8 18.2 L39.9 15.4 L39.3 15.9Z"/><path d="M2.9 14.6 L4.0 16.7 L3.5 16.2 L4.5 18.9 L3.7 18.3 L5.0 21.0 L4.0 20.4 L5.4 23.1 L4.2 22.5 L5.9 25.2 L4.5 24.7 L6.4 27.3 L-0.6 27.3 L1.3 24.7 L-0.1 25.2 L1.6 22.5 L0.4 23.1 L1.8 20.4 L0.8 21.0 L2.1 18.3 L1.3 18.9 L2.3 16.2 L1.8 16.7Z"/><path d="M0 21.4 Q7.0 18.2 14.5 20.8 T29.0 20.1 T58.0 20.8 V27.9 H0Z"/></g><rect y="27.95" width="58" height="4.550000000000001" fill="#6a3a1e" opacity=".9"/></svg></div><div class="abs" style="left:105px;top:81px;width:58.5px;height:32.5px;overflow:hidden;"><svg style="left:0;top:0" width="58.5" height="32.5" viewBox="0 0 58.5 32.5"><defs><linearGradient id="gd" x1="0" y1="0" x2="0" y2="1"><stop offset="0" stop-color="#86b0e6"/><stop offset=".45" stop-color="#4f78c4"/><stop offset="1" stop-color="#1d2f74"/></linearGradient><linearGradient id="gd2" x1="0" y1="0" x2="1" y2="1"><stop offset="0" stop-color="#b8702f"/><stop offset="1" stop-color="#6f3a1a"/></linearGradient></defs><rect width="58.5" height="32.5" fill="#08080a"/><rect x="1.500" y="2" width="6.500" height="27.0" fill="url(#gd)"/><rect x="9.500" y="2" width="15" height="27.0" fill="url(#gd)"/><rect x="26" y="2" width="31.0" height="12.500" fill="url(#gd)"/><rect x="26" y="16" width="31.0" height="14.0" fill="url(#gd2)"/><path d="M1.500 19.5 L8 22.1 V29.0 H1.500Z M9.500 22.1 L17 18.200000000000003 L24.500 20.8 V29.0 H9.500Z" fill="#1a2a6c" opacity=".75"/><path d="M26 11 L38 6.500 L57.0 10 V14.500 H26Z" fill="#3f5fae" opacity=".8"/><g fill="#3a180a" opacity=".75" filter="url(#tb)"><path d="M33.0 17.0 L34.4 19.2 L33.7 18.6 L35.0 21.3 L34.1 20.8 L35.7 23.5 L34.4 23.0 L36.3 25.7 L34.7 25.1 L36.9 27.8 L35.0 27.3 L37.5 30.0 L28.5 30.0 L31.0 27.3 L29.1 27.8 L31.3 25.1 L29.7 25.7 L31.6 23.0 L30.3 23.5 L31.9 20.8 L31.0 21.3 L32.3 18.6 L31.6 19.2Z"/><path d="M43.0 16.5 L44.7 18.8 L43.9 18.2 L45.5 21.0 L44.3 20.4 L46.2 23.2 L44.7 22.7 L47.0 25.5 L45.1 24.9 L47.7 27.8 L45.5 27.2 L48.5 30.0 L37.5 30.0 L40.5 27.2 L38.3 27.8 L40.9 24.9 L39.0 25.5 L41.3 22.7 L39.8 23.2 L41.7 20.4 L40.5 21.0 L42.1 18.2 L41.3 18.8Z"/><path d="M53.0 17.5 L54.4 19.6 L53.7 19.1 L55.0 21.7 L54.1 21.1 L55.7 23.8 L54.4 23.2 L56.3 25.8 L54.7 25.3 L56.9 27.9 L55.0 27.4 L57.5 30.0 L48.5 30.0 L51.0 27.4 L49.1 27.9 L51.3 25.3 L49.7 25.8 L51.6 23.2 L50.3 23.8 L51.9 21.1 L51.0 21.7 L52.3 19.1 L51.6 19.6Z"/></g></svg></div><div class="abs" style="left:170.5px;top:80.5px;width:58px;height:32.5px;overflow:hidden;"><svg style="left:0;top:0" width="58" height="32.5" viewBox="0 0 58 32.5"><defs><linearGradient id="gf" x1="0" y1="0" x2="1" y2="1"><stop offset="0" stop-color="#b08d8c"/><stop offset=".45" stop-color="#917899"/><stop offset="1" stop-color="#776aa2"/></linearGradient></defs><rect width="58" height="32.5" fill="url(#gf)"/><path d="M7.0 0 L17.4 0 L12.8 32.5 L1.2 32.5 Z" fill="#d4b4a6" opacity=".45"/><g fill="#4c4288" opacity=".75" filter="url(#tb)"><path d="M11.6 3.9 L13.6 7.8 L12.7 6.8 L14.5 11.7 L13.1 10.7 L15.4 15.6 L13.6 14.6 L16.2 19.5 L14.0 18.5 L17.1 23.4 L14.5 22.4 L18.0 27.3 L5.2 27.3 L8.7 22.4 L6.1 23.4 L9.2 18.5 L7.0 19.5 L9.6 14.6 L7.8 15.6 L10.1 10.7 L8.7 11.7 L10.5 6.8 L9.6 7.8Z"/><path d="M31.9 1.6 L34.3 5.9 L33.1 4.8 L35.3 10.2 L33.7 9.1 L36.3 14.5 L34.2 13.4 L37.4 18.7 L34.7 17.7 L38.4 23.0 L35.3 22.0 L39.4 27.3 L24.4 27.3 L28.5 22.0 L25.4 23.0 L29.1 17.7 L26.4 18.7 L29.6 13.4 L27.5 14.5 L30.1 9.1 L28.5 10.2 L30.7 4.8 L29.5 5.9Z"/><path d="M49.3 2.9 L52.0 7.0 L50.7 6.0 L53.1 11.1 L51.3 10.0 L54.3 15.1 L51.9 14.1 L55.4 19.2 L52.5 18.2 L56.6 23.2 L53.1 22.2 L57.7 27.3 L40.9 27.3 L45.5 22.2 L42.0 23.2 L46.1 18.2 L43.2 19.2 L46.7 14.1 L44.3 15.1 L47.3 10.0 L45.5 11.1 L47.9 6.0 L46.6 7.0Z"/><path d="M22.0 13.0 L23.4 15.4 L22.8 14.8 L24.0 17.8 L23.1 17.2 L24.6 20.1 L23.4 19.6 L25.2 22.5 L23.7 21.9 L25.8 24.9 L24.0 24.3 L26.4 27.3 L17.7 27.3 L20.1 24.3 L18.3 24.9 L20.4 21.9 L18.9 22.5 L20.7 19.6 L19.5 20.1 L21.0 17.2 L20.1 17.8 L21.3 14.8 L20.7 15.4Z"/><path d="M40.6 13.7 L41.9 15.9 L41.3 15.4 L42.4 18.2 L41.6 17.6 L43.0 20.5 L41.8 19.9 L43.6 22.8 L42.1 22.2 L44.1 25.0 L42.4 24.5 L44.7 27.3 L36.5 27.3 L38.8 24.5 L37.1 25.0 L39.1 22.2 L37.6 22.8 L39.4 19.9 L38.2 20.5 L39.6 17.6 L38.8 18.2 L39.9 15.4 L39.3 15.9Z"/><path d="M2.9 14.6 L4.0 16.7 L3.5 16.2 L4.5 18.9 L3.7 18.3 L5.0 21.0 L4.0 20.4 L5.4 23.1 L4.2 22.5 L5.9 25.2 L4.5 24.7 L6.4 27.3 L-0.6 27.3 L1.3 24.7 L-0.1 25.2 L1.6 22.5 L0.4 23.1 L1.8 20.4 L0.8 21.0 L2.1 18.3 L1.3 18.9 L2.3 16.2 L1.8 16.7Z"/><path d="M0 21.4 Q7.0 18.2 14.5 20.8 T29.0 20.1 T58.0 20.8 V27.9 H0Z"/></g><rect y="27.625" width="58" height="4.875" fill="#9794d2" opacity=".85"/></svg></div><span class="t" style="left:105.5px;top:62px;font-size:5.950px;color:#a8a8a8">クロスディゾルブ</span><span class="t" style="left:171px;top:62px;font-size:5.950px;color:#a8a8a8">カラーフェード</span><span class="t" style="left:105.5px;top:118.5px;font-size:5.950px;color:#a8a8a8">ディバイド</span><span class="t" style="left:171.5px;top:118.5px;font-size:5.950px;color:#a8a8a8">フロー</span></div>
<!-- dialog -->
<div id="hl" class="abs"></div><div id="dlg" class="abs"><div class="abs" style="left:61.5px;top:13.400px;width:34px;height:34px"><div class="abs" style="left:.9px;top:14px;width:31.8px;height:19.4px;border-radius:1.5px 1.5px 4.6px 4.6px;background:#1f2129"></div><div class="abs" style="left:2.6px;top:15.6px;width:28.2px;height:16.4px;border-radius:1px 1px 3.4px 3.4px;background:radial-gradient(circle at 50% 46%,rgba(255,255,255,.6) 0,rgba(255,255,255,.18) 22%,rgba(255,255,255,0) 50%),conic-gradient(from 0deg at 50% 46%,#ffb23a 0deg,#fa703a 25deg,#f2503c 50deg,#ee5aa0 85deg,#d878e0 115deg,#9a88f6 145deg,#5c9ef6 175deg,#5ad4ec 200deg,#6ee99a 225deg,#8ae84e 250deg,#c8e840 275deg,#f2e848 300deg,#fcd83e 335deg,#ffb23a 360deg)"></div><svg style="left:0;top:0" width="34" height="34" viewBox="0 0 34 34"><defs><clipPath id="c1"><rect x=".9" y="8.7" width="31.8" height="5.6" rx="1"/></clipPath><clipPath id="c2"><rect x=".9" y="2.9" width="31.8" height="5.6" rx="1.4"/></clipPath></defs><g clip-path="url(#c1)"><rect x=".9" y="8.7" width="31.8" height="5.6" fill="#25262e"/><path d="M-1.5 14.3l3.4-5.6h4.2l-3.4 5.6z" fill="#f2f2f6"/><path d="M6.7 14.3l3.4-5.6h4.2l-3.4 5.6z" fill="#f2f2f6"/><path d="M14.9 14.3l3.4-5.6h4.2l-3.4 5.6z" fill="#f2f2f6"/><path d="M23.1 14.3l3.4-5.6h4.2l-3.4 5.6z" fill="#f2f2f6"/><path d="M31.3 14.3l3.4-5.6h4.2l-3.4 5.6z" fill="#f2f2f6"/></g><g transform="rotate(-6 1.5 8.600)"><g clip-path="url(#c2)"><rect x=".9" y="2.9" width="31.800" height="5.600" fill="#25262e"/><path d="M2.6 2.900l3.400 5.600h4.200l-3.400-5.600z" fill="#f2f2f6"/><path d="M10.8 2.900l3.400 5.600h4.200l-3.400-5.600z" fill="#f2f2f6"/><path d="M19.0 2.900l3.400 5.600h4.200l-3.400-5.600z" fill="#f2f2f6"/><path d="M27.2 2.900l3.400 5.600h4.200l-3.400-5.600z" fill="#f2f2f6"/></g></g><circle cx="3" cy="9.300" r="1.500" fill="#e4e4ea"/></svg></div><div class="abs b" style="left:4px;top:62.600px;width:148px;text-align:center;font-size:7.100px;line-height:10px;color:#f2f2f2;white-space:nowrap">クリップエッジ外のメディアの長さが<br>十分でないため、トランジションを作<br>成できません。</div><div class="abs" style="left:0;top:99.000px;width:156px;text-align:center;font-size:6.050px;line-height:8px;color:#d2d2d2;white-space:nowrap">メディアをオーバーラップ（リップルトリム）<br>してトランジションを作成しますか? この操作<br>により、プロジェクトの合計の継続時間は短く<br>なることがあります。</div><div class="abs b" style="left:9.500px;top:141.500px;width:137.500px;height:16.500px;border-radius:3.500px;background:#4b4ec6;text-align:center;font-size:7.100px;line-height:17.500px;color:#f4f4f8">トランジションを作成</div><div class="abs b" style="left:9.500px;top:162px;width:137.500px;height:16.500px;border-radius:3.500px;background:#686868;text-align:center;font-size:7.100px;line-height:17.500px;color:#dedede">キャンセル</div></div>
</div>
</body>
</html>
